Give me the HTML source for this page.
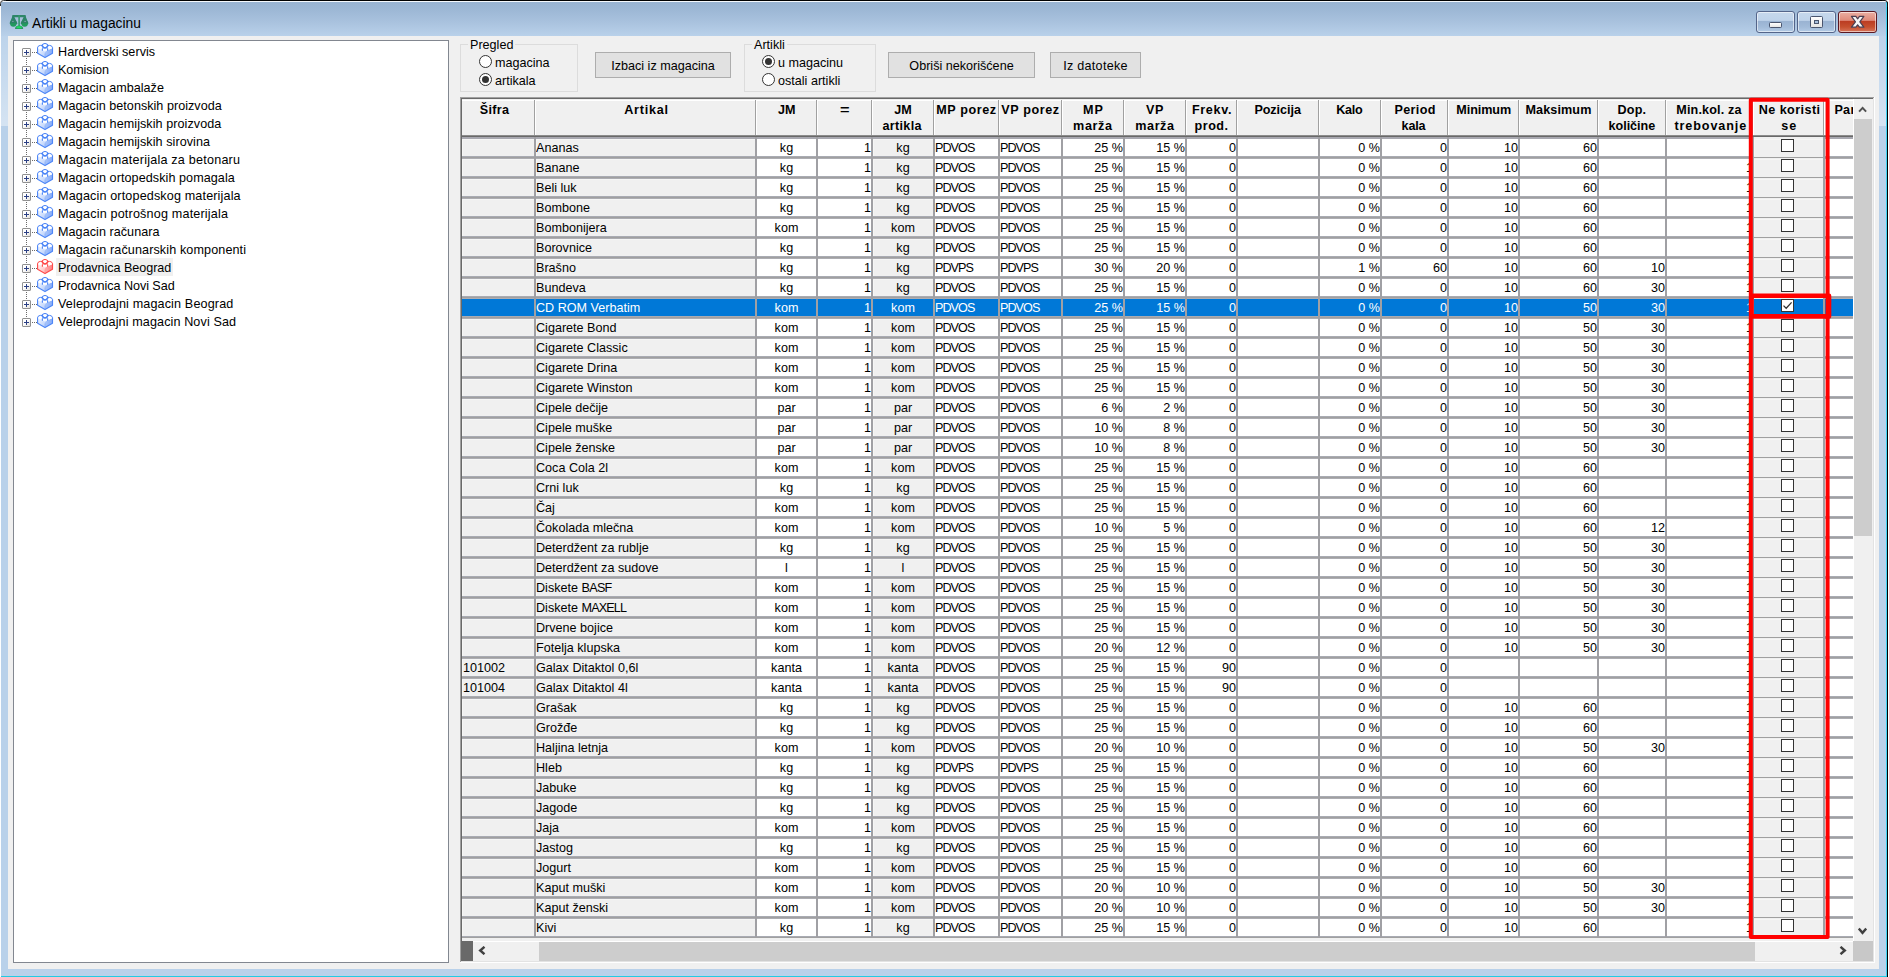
<!DOCTYPE html>
<html><head><meta charset="utf-8"><title>Artikli u magacinu</title>
<style>
*{box-sizing:border-box}
html,body{margin:0;padding:0}
body{width:1889px;height:977px;overflow:hidden;position:relative;background:#b9d1ea;font-family:"Liberation Sans",sans-serif;font-size:12.6px;color:#000;line-height:18px}
div,span,svg{position:absolute}
.t{white-space:nowrap}
#client{left:8px;top:36px;width:1871px;height:933px;background:#f0f0f0}
#tb{left:0;top:0;width:1889px;height:36px;background:linear-gradient(#98b3d1 0,#9bb6d4 8px,#a9c2de 22px,#b9d1ea 36px)}
#tree{left:13px;top:40px;width:436px;height:923px;border:1px solid #828790;background:#fff}
.ti{left:58px;height:18px;line-height:18px;white-space:nowrap}
.ex{left:22px;width:9px;height:9px;border:1px solid #919191;background:linear-gradient(135deg,#fff 0,#fff 40%,#e3e1dc 100%);border-radius:1px}
.ex:before,.ex:after{content:"";position:absolute;background:#2b3f84}
.ex:before{left:1px;top:3px;width:5px;height:1px}
.ex:after{left:3px;top:1px;width:1px;height:5px}
.hd{left:32px;width:5px;height:1px;background:repeating-linear-gradient(90deg,#6a6a6a 0,#6a6a6a 1px,transparent 1px,transparent 2px)}
.vd{left:26px;width:1px;height:8px;background:repeating-linear-gradient(180deg,#6a6a6a 0,#6a6a6a 1px,transparent 1px,transparent 2px)}
.gb{border:1px solid #dcdcdc;top:44px;height:48px}
.gl{top:37px;height:16px;line-height:16px;background:#f0f0f0;padding:0 2px;white-space:nowrap}
.rad{width:13px;height:13px;border:1px solid #333;border-radius:50%;background:#fff}
.rad.on:after{content:"";position:absolute;left:2px;top:2px;width:7px;height:7px;border-radius:50%;background:#333}
.rl{height:18px;line-height:18px;white-space:nowrap}
.btn{top:52px;height:26px;line-height:26px;border:1px solid #adadad;background:#e1e1e1;text-align:center;white-space:nowrap}
#grid{left:460px;top:97px;width:1415px;height:866px;background:#fff}
.h{top:101px;height:34px;background:#f0f0f0;font-weight:bold;text-align:center;line-height:16px;white-space:nowrap;overflow:hidden;padding-top:1px}
.hl{height:16px;line-height:16px;font-weight:bold;white-space:nowrap}
.hs{top:100px;width:2px;height:35px;background:linear-gradient(90deg,#a0a0a0 0,#a0a0a0 1px,#fff 1px,#fff 2px)}
.r{left:0;width:1889px;height:17px}
.c{top:0;height:17px;line-height:18px;background:#fff;white-space:nowrap;overflow:hidden}
.g{background:#f0f0f0;box-shadow:inset 1px 1px 0 #f6f6f5}
.ar{text-align:right;padding-right:0}
.k5,.k6{letter-spacing:-0.95px}
.k7,.k8,.k11{padding-right:0}
.k0{padding-left:1px}
i{font-style:normal}
.ti{letter-spacing:.08px}
.ac{text-align:center}
.sel .c{background:#0078d7;color:#fff;box-shadow:none}
.cb{left:27px;top:0;width:13px;height:13px;border:1px solid #333;background:#fff}

.k0{left:462px;width:72px}
.k1{left:536px;width:219px}
.k2{left:757px;width:59px}
.k3{left:818px;width:53px}
.k4{left:873px;width:60px}
.k5{left:935px;width:63px}
.k6{left:1000px;width:61px}
.k7{left:1063px;width:60px}
.k8{left:1125px;width:60px}
.k9{left:1187px;width:49px}
.k10{left:1238px;width:80px}
.k11{left:1320px;width:60px}
.k12{left:1382px;width:65px}
.k13{left:1449px;width:69px}
.k14{left:1520px;width:77px}
.k15{left:1599px;width:66px}
.k16{left:1667px;width:85px}
.k17{left:1754px;width:69px}
.k18{left:1825px;width:28px}
.k16{width:86px}</style></head>
<body>
<div id="tb"></div>
<div id="client"></div>
<div id="tree"></div>
<div class="vd" style="top:58px"></div>
<div class="hd" style="top:52px"></div>
<div class="ex" style="top:48px"></div>
<svg style="left:37px;top:43px" width="17" height="16" viewBox="0 0 17 16"><path d="M0.6 5 L0.6 10.3 L8 14.6 L8 8.6 Z" fill="url(#gbl)"/><path d="M8 8.6 L8 14.6 L15.5 10.3 L15.5 5 Z" fill="url(#gbr)"/><path d="M0.6 5 L8 1.6 L15.5 5 L8 8.8 Z" fill="#dfe9fe"/><path d="M0.6 4.2 L0.6 10.3 L8 14.6 L15.5 10.3 L15.5 4.2" fill="none" stroke="#4d86f7" stroke-width="1.15" stroke-linejoin="round"/><path d="M8 10.5 L8 14" stroke="#7aa5f9" stroke-width="0.6"/><path d="M0.8 4.2 Q3.4 1.3 6 4 L5.5 5.4 Q3.4 6.6 1.3 5.4 Z" fill="#fff"/><path d="M0.7 4.6 Q0.9 2.4 3.4 2.4 Q5.6 2.4 6 3.6" fill="none" stroke="#4d86f7" stroke-width="1"/><path d="M10 4 Q12.6 1.3 15.3 4.2 L14.7 5.4 Q12.6 6.6 10.5 5.4 Z" fill="#fff"/><path d="M10 3.6 Q10.4 2.4 12.6 2.4 Q15.1 2.4 15.4 4.6" fill="none" stroke="#4d86f7" stroke-width="1"/><path d="M5.2 1.9 Q8 -0.9 10.8 1.9 Q10.5 4.7 8 4.7 Q5.5 4.7 5.2 1.9 Z" fill="#fff" stroke="#4d86f7" stroke-width="1.05"/><path d="M5.6 5.9 Q8 4.6 10.4 5.9 L10 7.3 Q8 8.4 6 7.3 Z" fill="#fff"/><path d="M5.4 7.8 L5.4 5.2 M10.6 7.8 L10.6 5.2" fill="none" stroke="#4d86f7" stroke-width="1.1"/><path d="M5.2 2.4 Q5.6 5 8 5 Q10.4 5 10.8 2.4" fill="none" stroke="#4d86f7" stroke-width="1.3"/></svg>
<div class="ti" style="top:43px;letter-spacing:0.033px">Hardverski servis</div>
<div class="vd" style="top:76px"></div>
<div class="hd" style="top:70px"></div>
<div class="ex" style="top:66px"></div>
<svg style="left:37px;top:61px" width="17" height="16" viewBox="0 0 17 16"><path d="M0.6 5 L0.6 10.3 L8 14.6 L8 8.6 Z" fill="url(#gbl)"/><path d="M8 8.6 L8 14.6 L15.5 10.3 L15.5 5 Z" fill="url(#gbr)"/><path d="M0.6 5 L8 1.6 L15.5 5 L8 8.8 Z" fill="#dfe9fe"/><path d="M0.6 4.2 L0.6 10.3 L8 14.6 L15.5 10.3 L15.5 4.2" fill="none" stroke="#4d86f7" stroke-width="1.15" stroke-linejoin="round"/><path d="M8 10.5 L8 14" stroke="#7aa5f9" stroke-width="0.6"/><path d="M0.8 4.2 Q3.4 1.3 6 4 L5.5 5.4 Q3.4 6.6 1.3 5.4 Z" fill="#fff"/><path d="M0.7 4.6 Q0.9 2.4 3.4 2.4 Q5.6 2.4 6 3.6" fill="none" stroke="#4d86f7" stroke-width="1"/><path d="M10 4 Q12.6 1.3 15.3 4.2 L14.7 5.4 Q12.6 6.6 10.5 5.4 Z" fill="#fff"/><path d="M10 3.6 Q10.4 2.4 12.6 2.4 Q15.1 2.4 15.4 4.6" fill="none" stroke="#4d86f7" stroke-width="1"/><path d="M5.2 1.9 Q8 -0.9 10.8 1.9 Q10.5 4.7 8 4.7 Q5.5 4.7 5.2 1.9 Z" fill="#fff" stroke="#4d86f7" stroke-width="1.05"/><path d="M5.6 5.9 Q8 4.6 10.4 5.9 L10 7.3 Q8 8.4 6 7.3 Z" fill="#fff"/><path d="M5.4 7.8 L5.4 5.2 M10.6 7.8 L10.6 5.2" fill="none" stroke="#4d86f7" stroke-width="1.1"/><path d="M5.2 2.4 Q5.6 5 8 5 Q10.4 5 10.8 2.4" fill="none" stroke="#4d86f7" stroke-width="1.3"/></svg>
<div class="ti" style="top:61px;letter-spacing:-0.120px">Komision</div>
<div class="vd" style="top:94px"></div>
<div class="hd" style="top:88px"></div>
<div class="ex" style="top:84px"></div>
<svg style="left:37px;top:79px" width="17" height="16" viewBox="0 0 17 16"><path d="M0.6 5 L0.6 10.3 L8 14.6 L8 8.6 Z" fill="url(#gbl)"/><path d="M8 8.6 L8 14.6 L15.5 10.3 L15.5 5 Z" fill="url(#gbr)"/><path d="M0.6 5 L8 1.6 L15.5 5 L8 8.8 Z" fill="#dfe9fe"/><path d="M0.6 4.2 L0.6 10.3 L8 14.6 L15.5 10.3 L15.5 4.2" fill="none" stroke="#4d86f7" stroke-width="1.15" stroke-linejoin="round"/><path d="M8 10.5 L8 14" stroke="#7aa5f9" stroke-width="0.6"/><path d="M0.8 4.2 Q3.4 1.3 6 4 L5.5 5.4 Q3.4 6.6 1.3 5.4 Z" fill="#fff"/><path d="M0.7 4.6 Q0.9 2.4 3.4 2.4 Q5.6 2.4 6 3.6" fill="none" stroke="#4d86f7" stroke-width="1"/><path d="M10 4 Q12.6 1.3 15.3 4.2 L14.7 5.4 Q12.6 6.6 10.5 5.4 Z" fill="#fff"/><path d="M10 3.6 Q10.4 2.4 12.6 2.4 Q15.1 2.4 15.4 4.6" fill="none" stroke="#4d86f7" stroke-width="1"/><path d="M5.2 1.9 Q8 -0.9 10.8 1.9 Q10.5 4.7 8 4.7 Q5.5 4.7 5.2 1.9 Z" fill="#fff" stroke="#4d86f7" stroke-width="1.05"/><path d="M5.6 5.9 Q8 4.6 10.4 5.9 L10 7.3 Q8 8.4 6 7.3 Z" fill="#fff"/><path d="M5.4 7.8 L5.4 5.2 M10.6 7.8 L10.6 5.2" fill="none" stroke="#4d86f7" stroke-width="1.1"/><path d="M5.2 2.4 Q5.6 5 8 5 Q10.4 5 10.8 2.4" fill="none" stroke="#4d86f7" stroke-width="1.3"/></svg>
<div class="ti" style="top:79px;letter-spacing:0.013px">Magacin ambalaže</div>
<div class="vd" style="top:112px"></div>
<div class="hd" style="top:106px"></div>
<div class="ex" style="top:102px"></div>
<svg style="left:37px;top:97px" width="17" height="16" viewBox="0 0 17 16"><path d="M0.6 5 L0.6 10.3 L8 14.6 L8 8.6 Z" fill="url(#gbl)"/><path d="M8 8.6 L8 14.6 L15.5 10.3 L15.5 5 Z" fill="url(#gbr)"/><path d="M0.6 5 L8 1.6 L15.5 5 L8 8.8 Z" fill="#dfe9fe"/><path d="M0.6 4.2 L0.6 10.3 L8 14.6 L15.5 10.3 L15.5 4.2" fill="none" stroke="#4d86f7" stroke-width="1.15" stroke-linejoin="round"/><path d="M8 10.5 L8 14" stroke="#7aa5f9" stroke-width="0.6"/><path d="M0.8 4.2 Q3.4 1.3 6 4 L5.5 5.4 Q3.4 6.6 1.3 5.4 Z" fill="#fff"/><path d="M0.7 4.6 Q0.9 2.4 3.4 2.4 Q5.6 2.4 6 3.6" fill="none" stroke="#4d86f7" stroke-width="1"/><path d="M10 4 Q12.6 1.3 15.3 4.2 L14.7 5.4 Q12.6 6.6 10.5 5.4 Z" fill="#fff"/><path d="M10 3.6 Q10.4 2.4 12.6 2.4 Q15.1 2.4 15.4 4.6" fill="none" stroke="#4d86f7" stroke-width="1"/><path d="M5.2 1.9 Q8 -0.9 10.8 1.9 Q10.5 4.7 8 4.7 Q5.5 4.7 5.2 1.9 Z" fill="#fff" stroke="#4d86f7" stroke-width="1.05"/><path d="M5.6 5.9 Q8 4.6 10.4 5.9 L10 7.3 Q8 8.4 6 7.3 Z" fill="#fff"/><path d="M5.4 7.8 L5.4 5.2 M10.6 7.8 L10.6 5.2" fill="none" stroke="#4d86f7" stroke-width="1.1"/><path d="M5.2 2.4 Q5.6 5 8 5 Q10.4 5 10.8 2.4" fill="none" stroke="#4d86f7" stroke-width="1.3"/></svg>
<div class="ti" style="top:97px;letter-spacing:0.022px">Magacin betonskih proizvoda</div>
<div class="vd" style="top:130px"></div>
<div class="hd" style="top:124px"></div>
<div class="ex" style="top:120px"></div>
<svg style="left:37px;top:115px" width="17" height="16" viewBox="0 0 17 16"><path d="M0.6 5 L0.6 10.3 L8 14.6 L8 8.6 Z" fill="url(#gbl)"/><path d="M8 8.6 L8 14.6 L15.5 10.3 L15.5 5 Z" fill="url(#gbr)"/><path d="M0.6 5 L8 1.6 L15.5 5 L8 8.8 Z" fill="#dfe9fe"/><path d="M0.6 4.2 L0.6 10.3 L8 14.6 L15.5 10.3 L15.5 4.2" fill="none" stroke="#4d86f7" stroke-width="1.15" stroke-linejoin="round"/><path d="M8 10.5 L8 14" stroke="#7aa5f9" stroke-width="0.6"/><path d="M0.8 4.2 Q3.4 1.3 6 4 L5.5 5.4 Q3.4 6.6 1.3 5.4 Z" fill="#fff"/><path d="M0.7 4.6 Q0.9 2.4 3.4 2.4 Q5.6 2.4 6 3.6" fill="none" stroke="#4d86f7" stroke-width="1"/><path d="M10 4 Q12.6 1.3 15.3 4.2 L14.7 5.4 Q12.6 6.6 10.5 5.4 Z" fill="#fff"/><path d="M10 3.6 Q10.4 2.4 12.6 2.4 Q15.1 2.4 15.4 4.6" fill="none" stroke="#4d86f7" stroke-width="1"/><path d="M5.2 1.9 Q8 -0.9 10.8 1.9 Q10.5 4.7 8 4.7 Q5.5 4.7 5.2 1.9 Z" fill="#fff" stroke="#4d86f7" stroke-width="1.05"/><path d="M5.6 5.9 Q8 4.6 10.4 5.9 L10 7.3 Q8 8.4 6 7.3 Z" fill="#fff"/><path d="M5.4 7.8 L5.4 5.2 M10.6 7.8 L10.6 5.2" fill="none" stroke="#4d86f7" stroke-width="1.1"/><path d="M5.2 2.4 Q5.6 5 8 5 Q10.4 5 10.8 2.4" fill="none" stroke="#4d86f7" stroke-width="1.3"/></svg>
<div class="ti" style="top:115px;letter-spacing:0.061px">Magacin hemijskih proizvoda</div>
<div class="vd" style="top:148px"></div>
<div class="hd" style="top:142px"></div>
<div class="ex" style="top:138px"></div>
<svg style="left:37px;top:133px" width="17" height="16" viewBox="0 0 17 16"><path d="M0.6 5 L0.6 10.3 L8 14.6 L8 8.6 Z" fill="url(#gbl)"/><path d="M8 8.6 L8 14.6 L15.5 10.3 L15.5 5 Z" fill="url(#gbr)"/><path d="M0.6 5 L8 1.6 L15.5 5 L8 8.8 Z" fill="#dfe9fe"/><path d="M0.6 4.2 L0.6 10.3 L8 14.6 L15.5 10.3 L15.5 4.2" fill="none" stroke="#4d86f7" stroke-width="1.15" stroke-linejoin="round"/><path d="M8 10.5 L8 14" stroke="#7aa5f9" stroke-width="0.6"/><path d="M0.8 4.2 Q3.4 1.3 6 4 L5.5 5.4 Q3.4 6.6 1.3 5.4 Z" fill="#fff"/><path d="M0.7 4.6 Q0.9 2.4 3.4 2.4 Q5.6 2.4 6 3.6" fill="none" stroke="#4d86f7" stroke-width="1"/><path d="M10 4 Q12.6 1.3 15.3 4.2 L14.7 5.4 Q12.6 6.6 10.5 5.4 Z" fill="#fff"/><path d="M10 3.6 Q10.4 2.4 12.6 2.4 Q15.1 2.4 15.4 4.6" fill="none" stroke="#4d86f7" stroke-width="1"/><path d="M5.2 1.9 Q8 -0.9 10.8 1.9 Q10.5 4.7 8 4.7 Q5.5 4.7 5.2 1.9 Z" fill="#fff" stroke="#4d86f7" stroke-width="1.05"/><path d="M5.6 5.9 Q8 4.6 10.4 5.9 L10 7.3 Q8 8.4 6 7.3 Z" fill="#fff"/><path d="M5.4 7.8 L5.4 5.2 M10.6 7.8 L10.6 5.2" fill="none" stroke="#4d86f7" stroke-width="1.1"/><path d="M5.2 2.4 Q5.6 5 8 5 Q10.4 5 10.8 2.4" fill="none" stroke="#4d86f7" stroke-width="1.3"/></svg>
<div class="ti" style="top:133px;letter-spacing:0.060px">Magacin hemijskih sirovina</div>
<div class="vd" style="top:166px"></div>
<div class="hd" style="top:160px"></div>
<div class="ex" style="top:156px"></div>
<svg style="left:37px;top:151px" width="17" height="16" viewBox="0 0 17 16"><path d="M0.6 5 L0.6 10.3 L8 14.6 L8 8.6 Z" fill="url(#gbl)"/><path d="M8 8.6 L8 14.6 L15.5 10.3 L15.5 5 Z" fill="url(#gbr)"/><path d="M0.6 5 L8 1.6 L15.5 5 L8 8.8 Z" fill="#dfe9fe"/><path d="M0.6 4.2 L0.6 10.3 L8 14.6 L15.5 10.3 L15.5 4.2" fill="none" stroke="#4d86f7" stroke-width="1.15" stroke-linejoin="round"/><path d="M8 10.5 L8 14" stroke="#7aa5f9" stroke-width="0.6"/><path d="M0.8 4.2 Q3.4 1.3 6 4 L5.5 5.4 Q3.4 6.6 1.3 5.4 Z" fill="#fff"/><path d="M0.7 4.6 Q0.9 2.4 3.4 2.4 Q5.6 2.4 6 3.6" fill="none" stroke="#4d86f7" stroke-width="1"/><path d="M10 4 Q12.6 1.3 15.3 4.2 L14.7 5.4 Q12.6 6.6 10.5 5.4 Z" fill="#fff"/><path d="M10 3.6 Q10.4 2.4 12.6 2.4 Q15.1 2.4 15.4 4.6" fill="none" stroke="#4d86f7" stroke-width="1"/><path d="M5.2 1.9 Q8 -0.9 10.8 1.9 Q10.5 4.7 8 4.7 Q5.5 4.7 5.2 1.9 Z" fill="#fff" stroke="#4d86f7" stroke-width="1.05"/><path d="M5.6 5.9 Q8 4.6 10.4 5.9 L10 7.3 Q8 8.4 6 7.3 Z" fill="#fff"/><path d="M5.4 7.8 L5.4 5.2 M10.6 7.8 L10.6 5.2" fill="none" stroke="#4d86f7" stroke-width="1.1"/><path d="M5.2 2.4 Q5.6 5 8 5 Q10.4 5 10.8 2.4" fill="none" stroke="#4d86f7" stroke-width="1.3"/></svg>
<div class="ti" style="top:151px;letter-spacing:0.218px">Magacin materijala za betonaru</div>
<div class="vd" style="top:184px"></div>
<div class="hd" style="top:178px"></div>
<div class="ex" style="top:174px"></div>
<svg style="left:37px;top:169px" width="17" height="16" viewBox="0 0 17 16"><path d="M0.6 5 L0.6 10.3 L8 14.6 L8 8.6 Z" fill="url(#gbl)"/><path d="M8 8.6 L8 14.6 L15.5 10.3 L15.5 5 Z" fill="url(#gbr)"/><path d="M0.6 5 L8 1.6 L15.5 5 L8 8.8 Z" fill="#dfe9fe"/><path d="M0.6 4.2 L0.6 10.3 L8 14.6 L15.5 10.3 L15.5 4.2" fill="none" stroke="#4d86f7" stroke-width="1.15" stroke-linejoin="round"/><path d="M8 10.5 L8 14" stroke="#7aa5f9" stroke-width="0.6"/><path d="M0.8 4.2 Q3.4 1.3 6 4 L5.5 5.4 Q3.4 6.6 1.3 5.4 Z" fill="#fff"/><path d="M0.7 4.6 Q0.9 2.4 3.4 2.4 Q5.6 2.4 6 3.6" fill="none" stroke="#4d86f7" stroke-width="1"/><path d="M10 4 Q12.6 1.3 15.3 4.2 L14.7 5.4 Q12.6 6.6 10.5 5.4 Z" fill="#fff"/><path d="M10 3.6 Q10.4 2.4 12.6 2.4 Q15.1 2.4 15.4 4.6" fill="none" stroke="#4d86f7" stroke-width="1"/><path d="M5.2 1.9 Q8 -0.9 10.8 1.9 Q10.5 4.7 8 4.7 Q5.5 4.7 5.2 1.9 Z" fill="#fff" stroke="#4d86f7" stroke-width="1.05"/><path d="M5.6 5.9 Q8 4.6 10.4 5.9 L10 7.3 Q8 8.4 6 7.3 Z" fill="#fff"/><path d="M5.4 7.8 L5.4 5.2 M10.6 7.8 L10.6 5.2" fill="none" stroke="#4d86f7" stroke-width="1.1"/><path d="M5.2 2.4 Q5.6 5 8 5 Q10.4 5 10.8 2.4" fill="none" stroke="#4d86f7" stroke-width="1.3"/></svg>
<div class="ti" style="top:169px;letter-spacing:0.065px">Magacin ortopedskih pomagala</div>
<div class="vd" style="top:202px"></div>
<div class="hd" style="top:196px"></div>
<div class="ex" style="top:192px"></div>
<svg style="left:37px;top:187px" width="17" height="16" viewBox="0 0 17 16"><path d="M0.6 5 L0.6 10.3 L8 14.6 L8 8.6 Z" fill="url(#gbl)"/><path d="M8 8.6 L8 14.6 L15.5 10.3 L15.5 5 Z" fill="url(#gbr)"/><path d="M0.6 5 L8 1.6 L15.5 5 L8 8.8 Z" fill="#dfe9fe"/><path d="M0.6 4.2 L0.6 10.3 L8 14.6 L15.5 10.3 L15.5 4.2" fill="none" stroke="#4d86f7" stroke-width="1.15" stroke-linejoin="round"/><path d="M8 10.5 L8 14" stroke="#7aa5f9" stroke-width="0.6"/><path d="M0.8 4.2 Q3.4 1.3 6 4 L5.5 5.4 Q3.4 6.6 1.3 5.4 Z" fill="#fff"/><path d="M0.7 4.6 Q0.9 2.4 3.4 2.4 Q5.6 2.4 6 3.6" fill="none" stroke="#4d86f7" stroke-width="1"/><path d="M10 4 Q12.6 1.3 15.3 4.2 L14.7 5.4 Q12.6 6.6 10.5 5.4 Z" fill="#fff"/><path d="M10 3.6 Q10.4 2.4 12.6 2.4 Q15.1 2.4 15.4 4.6" fill="none" stroke="#4d86f7" stroke-width="1"/><path d="M5.2 1.9 Q8 -0.9 10.8 1.9 Q10.5 4.7 8 4.7 Q5.5 4.7 5.2 1.9 Z" fill="#fff" stroke="#4d86f7" stroke-width="1.05"/><path d="M5.6 5.9 Q8 4.6 10.4 5.9 L10 7.3 Q8 8.4 6 7.3 Z" fill="#fff"/><path d="M5.4 7.8 L5.4 5.2 M10.6 7.8 L10.6 5.2" fill="none" stroke="#4d86f7" stroke-width="1.1"/><path d="M5.2 2.4 Q5.6 5 8 5 Q10.4 5 10.8 2.4" fill="none" stroke="#4d86f7" stroke-width="1.3"/></svg>
<div class="ti" style="top:187px;letter-spacing:0.140px">Magacin ortopedskog materijala</div>
<div class="vd" style="top:220px"></div>
<div class="hd" style="top:214px"></div>
<div class="ex" style="top:210px"></div>
<svg style="left:37px;top:205px" width="17" height="16" viewBox="0 0 17 16"><path d="M0.6 5 L0.6 10.3 L8 14.6 L8 8.6 Z" fill="url(#gbl)"/><path d="M8 8.6 L8 14.6 L15.5 10.3 L15.5 5 Z" fill="url(#gbr)"/><path d="M0.6 5 L8 1.6 L15.5 5 L8 8.8 Z" fill="#dfe9fe"/><path d="M0.6 4.2 L0.6 10.3 L8 14.6 L15.5 10.3 L15.5 4.2" fill="none" stroke="#4d86f7" stroke-width="1.15" stroke-linejoin="round"/><path d="M8 10.5 L8 14" stroke="#7aa5f9" stroke-width="0.6"/><path d="M0.8 4.2 Q3.4 1.3 6 4 L5.5 5.4 Q3.4 6.6 1.3 5.4 Z" fill="#fff"/><path d="M0.7 4.6 Q0.9 2.4 3.4 2.4 Q5.6 2.4 6 3.6" fill="none" stroke="#4d86f7" stroke-width="1"/><path d="M10 4 Q12.6 1.3 15.3 4.2 L14.7 5.4 Q12.6 6.6 10.5 5.4 Z" fill="#fff"/><path d="M10 3.6 Q10.4 2.4 12.6 2.4 Q15.1 2.4 15.4 4.6" fill="none" stroke="#4d86f7" stroke-width="1"/><path d="M5.2 1.9 Q8 -0.9 10.8 1.9 Q10.5 4.7 8 4.7 Q5.5 4.7 5.2 1.9 Z" fill="#fff" stroke="#4d86f7" stroke-width="1.05"/><path d="M5.6 5.9 Q8 4.6 10.4 5.9 L10 7.3 Q8 8.4 6 7.3 Z" fill="#fff"/><path d="M5.4 7.8 L5.4 5.2 M10.6 7.8 L10.6 5.2" fill="none" stroke="#4d86f7" stroke-width="1.1"/><path d="M5.2 2.4 Q5.6 5 8 5 Q10.4 5 10.8 2.4" fill="none" stroke="#4d86f7" stroke-width="1.3"/></svg>
<div class="ti" style="top:205px;letter-spacing:0.176px">Magacin potrošnog materijala</div>
<div class="vd" style="top:238px"></div>
<div class="hd" style="top:232px"></div>
<div class="ex" style="top:228px"></div>
<svg style="left:37px;top:223px" width="17" height="16" viewBox="0 0 17 16"><path d="M0.6 5 L0.6 10.3 L8 14.6 L8 8.6 Z" fill="url(#gbl)"/><path d="M8 8.6 L8 14.6 L15.5 10.3 L15.5 5 Z" fill="url(#gbr)"/><path d="M0.6 5 L8 1.6 L15.5 5 L8 8.8 Z" fill="#dfe9fe"/><path d="M0.6 4.2 L0.6 10.3 L8 14.6 L15.5 10.3 L15.5 4.2" fill="none" stroke="#4d86f7" stroke-width="1.15" stroke-linejoin="round"/><path d="M8 10.5 L8 14" stroke="#7aa5f9" stroke-width="0.6"/><path d="M0.8 4.2 Q3.4 1.3 6 4 L5.5 5.4 Q3.4 6.6 1.3 5.4 Z" fill="#fff"/><path d="M0.7 4.6 Q0.9 2.4 3.4 2.4 Q5.6 2.4 6 3.6" fill="none" stroke="#4d86f7" stroke-width="1"/><path d="M10 4 Q12.6 1.3 15.3 4.2 L14.7 5.4 Q12.6 6.6 10.5 5.4 Z" fill="#fff"/><path d="M10 3.6 Q10.4 2.4 12.6 2.4 Q15.1 2.4 15.4 4.6" fill="none" stroke="#4d86f7" stroke-width="1"/><path d="M5.2 1.9 Q8 -0.9 10.8 1.9 Q10.5 4.7 8 4.7 Q5.5 4.7 5.2 1.9 Z" fill="#fff" stroke="#4d86f7" stroke-width="1.05"/><path d="M5.6 5.9 Q8 4.6 10.4 5.9 L10 7.3 Q8 8.4 6 7.3 Z" fill="#fff"/><path d="M5.4 7.8 L5.4 5.2 M10.6 7.8 L10.6 5.2" fill="none" stroke="#4d86f7" stroke-width="1.1"/><path d="M5.2 2.4 Q5.6 5 8 5 Q10.4 5 10.8 2.4" fill="none" stroke="#4d86f7" stroke-width="1.3"/></svg>
<div class="ti" style="top:223px;letter-spacing:0.047px">Magacin računara</div>
<div class="vd" style="top:256px"></div>
<div class="hd" style="top:250px"></div>
<div class="ex" style="top:246px"></div>
<svg style="left:37px;top:241px" width="17" height="16" viewBox="0 0 17 16"><path d="M0.6 5 L0.6 10.3 L8 14.6 L8 8.6 Z" fill="url(#gbl)"/><path d="M8 8.6 L8 14.6 L15.5 10.3 L15.5 5 Z" fill="url(#gbr)"/><path d="M0.6 5 L8 1.6 L15.5 5 L8 8.8 Z" fill="#dfe9fe"/><path d="M0.6 4.2 L0.6 10.3 L8 14.6 L15.5 10.3 L15.5 4.2" fill="none" stroke="#4d86f7" stroke-width="1.15" stroke-linejoin="round"/><path d="M8 10.5 L8 14" stroke="#7aa5f9" stroke-width="0.6"/><path d="M0.8 4.2 Q3.4 1.3 6 4 L5.5 5.4 Q3.4 6.6 1.3 5.4 Z" fill="#fff"/><path d="M0.7 4.6 Q0.9 2.4 3.4 2.4 Q5.6 2.4 6 3.6" fill="none" stroke="#4d86f7" stroke-width="1"/><path d="M10 4 Q12.6 1.3 15.3 4.2 L14.7 5.4 Q12.6 6.6 10.5 5.4 Z" fill="#fff"/><path d="M10 3.6 Q10.4 2.4 12.6 2.4 Q15.1 2.4 15.4 4.6" fill="none" stroke="#4d86f7" stroke-width="1"/><path d="M5.2 1.9 Q8 -0.9 10.8 1.9 Q10.5 4.7 8 4.7 Q5.5 4.7 5.2 1.9 Z" fill="#fff" stroke="#4d86f7" stroke-width="1.05"/><path d="M5.6 5.9 Q8 4.6 10.4 5.9 L10 7.3 Q8 8.4 6 7.3 Z" fill="#fff"/><path d="M5.4 7.8 L5.4 5.2 M10.6 7.8 L10.6 5.2" fill="none" stroke="#4d86f7" stroke-width="1.1"/><path d="M5.2 2.4 Q5.6 5 8 5 Q10.4 5 10.8 2.4" fill="none" stroke="#4d86f7" stroke-width="1.3"/></svg>
<div class="ti" style="top:241px;letter-spacing:0.111px">Magacin računarskih komponenti</div>
<div class="vd" style="top:274px"></div>
<div class="hd" style="top:268px"></div>
<div class="ex" style="top:264px"></div>
<svg style="left:37px;top:259px" width="17" height="16" viewBox="0 0 17 16"><path d="M0.6 5 L0.6 10.3 L8 14.6 L8 8.6 Z" fill="url(#grl)"/><path d="M8 8.6 L8 14.6 L15.5 10.3 L15.5 5 Z" fill="url(#grr)"/><path d="M0.6 5 L8 1.6 L15.5 5 L8 8.8 Z" fill="#ffe3e3"/><path d="M0.6 4.2 L0.6 10.3 L8 14.6 L15.5 10.3 L15.5 4.2" fill="none" stroke="#ff4a4a" stroke-width="1.15" stroke-linejoin="round"/><path d="M8 10.5 L8 14" stroke="#ff8a8a" stroke-width="0.6"/><path d="M0.8 4.2 Q3.4 1.3 6 4 L5.5 5.4 Q3.4 6.6 1.3 5.4 Z" fill="#fff"/><path d="M0.7 4.6 Q0.9 2.4 3.4 2.4 Q5.6 2.4 6 3.6" fill="none" stroke="#ff4a4a" stroke-width="1"/><path d="M10 4 Q12.6 1.3 15.3 4.2 L14.7 5.4 Q12.6 6.6 10.5 5.4 Z" fill="#fff"/><path d="M10 3.6 Q10.4 2.4 12.6 2.4 Q15.1 2.4 15.4 4.6" fill="none" stroke="#ff4a4a" stroke-width="1"/><path d="M5.2 1.9 Q8 -0.9 10.8 1.9 Q10.5 4.7 8 4.7 Q5.5 4.7 5.2 1.9 Z" fill="#fff" stroke="#ff4a4a" stroke-width="1.05"/><path d="M5.6 5.9 Q8 4.6 10.4 5.9 L10 7.3 Q8 8.4 6 7.3 Z" fill="#fff"/><path d="M5.4 7.8 L5.4 5.2 M10.6 7.8 L10.6 5.2" fill="none" stroke="#ff4a4a" stroke-width="1.1"/><path d="M5.2 2.4 Q5.6 5 8 5 Q10.4 5 10.8 2.4" fill="none" stroke="#ff4a4a" stroke-width="1.3"/></svg>
<div style="left:56px;top:258px;width:117px;height:18px;background:#f0f0f0"></div>
<div class="ti" style="top:259px;letter-spacing:-0.052px">Prodavnica Beograd</div>
<div class="vd" style="top:292px"></div>
<div class="hd" style="top:286px"></div>
<div class="ex" style="top:282px"></div>
<svg style="left:37px;top:277px" width="17" height="16" viewBox="0 0 17 16"><path d="M0.6 5 L0.6 10.3 L8 14.6 L8 8.6 Z" fill="url(#gbl)"/><path d="M8 8.6 L8 14.6 L15.5 10.3 L15.5 5 Z" fill="url(#gbr)"/><path d="M0.6 5 L8 1.6 L15.5 5 L8 8.8 Z" fill="#dfe9fe"/><path d="M0.6 4.2 L0.6 10.3 L8 14.6 L15.5 10.3 L15.5 4.2" fill="none" stroke="#4d86f7" stroke-width="1.15" stroke-linejoin="round"/><path d="M8 10.5 L8 14" stroke="#7aa5f9" stroke-width="0.6"/><path d="M0.8 4.2 Q3.4 1.3 6 4 L5.5 5.4 Q3.4 6.6 1.3 5.4 Z" fill="#fff"/><path d="M0.7 4.6 Q0.9 2.4 3.4 2.4 Q5.6 2.4 6 3.6" fill="none" stroke="#4d86f7" stroke-width="1"/><path d="M10 4 Q12.6 1.3 15.3 4.2 L14.7 5.4 Q12.6 6.6 10.5 5.4 Z" fill="#fff"/><path d="M10 3.6 Q10.4 2.4 12.6 2.4 Q15.1 2.4 15.4 4.6" fill="none" stroke="#4d86f7" stroke-width="1"/><path d="M5.2 1.9 Q8 -0.9 10.8 1.9 Q10.5 4.7 8 4.7 Q5.5 4.7 5.2 1.9 Z" fill="#fff" stroke="#4d86f7" stroke-width="1.05"/><path d="M5.6 5.9 Q8 4.6 10.4 5.9 L10 7.3 Q8 8.4 6 7.3 Z" fill="#fff"/><path d="M5.4 7.8 L5.4 5.2 M10.6 7.8 L10.6 5.2" fill="none" stroke="#4d86f7" stroke-width="1.1"/><path d="M5.2 2.4 Q5.6 5 8 5 Q10.4 5 10.8 2.4" fill="none" stroke="#4d86f7" stroke-width="1.3"/></svg>
<div class="ti" style="top:277px;letter-spacing:-0.053px">Prodavnica Novi Sad</div>
<div class="vd" style="top:310px"></div>
<div class="hd" style="top:304px"></div>
<div class="ex" style="top:300px"></div>
<svg style="left:37px;top:295px" width="17" height="16" viewBox="0 0 17 16"><path d="M0.6 5 L0.6 10.3 L8 14.6 L8 8.6 Z" fill="url(#gbl)"/><path d="M8 8.6 L8 14.6 L15.5 10.3 L15.5 5 Z" fill="url(#gbr)"/><path d="M0.6 5 L8 1.6 L15.5 5 L8 8.8 Z" fill="#dfe9fe"/><path d="M0.6 4.2 L0.6 10.3 L8 14.6 L15.5 10.3 L15.5 4.2" fill="none" stroke="#4d86f7" stroke-width="1.15" stroke-linejoin="round"/><path d="M8 10.5 L8 14" stroke="#7aa5f9" stroke-width="0.6"/><path d="M0.8 4.2 Q3.4 1.3 6 4 L5.5 5.4 Q3.4 6.6 1.3 5.4 Z" fill="#fff"/><path d="M0.7 4.6 Q0.9 2.4 3.4 2.4 Q5.6 2.4 6 3.6" fill="none" stroke="#4d86f7" stroke-width="1"/><path d="M10 4 Q12.6 1.3 15.3 4.2 L14.7 5.4 Q12.6 6.6 10.5 5.4 Z" fill="#fff"/><path d="M10 3.6 Q10.4 2.4 12.6 2.4 Q15.1 2.4 15.4 4.6" fill="none" stroke="#4d86f7" stroke-width="1"/><path d="M5.2 1.9 Q8 -0.9 10.8 1.9 Q10.5 4.7 8 4.7 Q5.5 4.7 5.2 1.9 Z" fill="#fff" stroke="#4d86f7" stroke-width="1.05"/><path d="M5.6 5.9 Q8 4.6 10.4 5.9 L10 7.3 Q8 8.4 6 7.3 Z" fill="#fff"/><path d="M5.4 7.8 L5.4 5.2 M10.6 7.8 L10.6 5.2" fill="none" stroke="#4d86f7" stroke-width="1.1"/><path d="M5.2 2.4 Q5.6 5 8 5 Q10.4 5 10.8 2.4" fill="none" stroke="#4d86f7" stroke-width="1.3"/></svg>
<div class="ti" style="top:295px;letter-spacing:0.139px">Veleprodajni magacin Beograd</div>
<div class="hd" style="top:322px"></div>
<div class="ex" style="top:318px"></div>
<svg style="left:37px;top:313px" width="17" height="16" viewBox="0 0 17 16"><path d="M0.6 5 L0.6 10.3 L8 14.6 L8 8.6 Z" fill="url(#gbl)"/><path d="M8 8.6 L8 14.6 L15.5 10.3 L15.5 5 Z" fill="url(#gbr)"/><path d="M0.6 5 L8 1.6 L15.5 5 L8 8.8 Z" fill="#dfe9fe"/><path d="M0.6 4.2 L0.6 10.3 L8 14.6 L15.5 10.3 L15.5 4.2" fill="none" stroke="#4d86f7" stroke-width="1.15" stroke-linejoin="round"/><path d="M8 10.5 L8 14" stroke="#7aa5f9" stroke-width="0.6"/><path d="M0.8 4.2 Q3.4 1.3 6 4 L5.5 5.4 Q3.4 6.6 1.3 5.4 Z" fill="#fff"/><path d="M0.7 4.6 Q0.9 2.4 3.4 2.4 Q5.6 2.4 6 3.6" fill="none" stroke="#4d86f7" stroke-width="1"/><path d="M10 4 Q12.6 1.3 15.3 4.2 L14.7 5.4 Q12.6 6.6 10.5 5.4 Z" fill="#fff"/><path d="M10 3.6 Q10.4 2.4 12.6 2.4 Q15.1 2.4 15.4 4.6" fill="none" stroke="#4d86f7" stroke-width="1"/><path d="M5.2 1.9 Q8 -0.9 10.8 1.9 Q10.5 4.7 8 4.7 Q5.5 4.7 5.2 1.9 Z" fill="#fff" stroke="#4d86f7" stroke-width="1.05"/><path d="M5.6 5.9 Q8 4.6 10.4 5.9 L10 7.3 Q8 8.4 6 7.3 Z" fill="#fff"/><path d="M5.4 7.8 L5.4 5.2 M10.6 7.8 L10.6 5.2" fill="none" stroke="#4d86f7" stroke-width="1.1"/><path d="M5.2 2.4 Q5.6 5 8 5 Q10.4 5 10.8 2.4" fill="none" stroke="#4d86f7" stroke-width="1.3"/></svg>
<div class="ti" style="top:313px;letter-spacing:0.107px">Veleprodajni magacin Novi Sad</div>
<div class="gb" style="left:460px;width:118px"></div><div class="gl" style="left:468px">Pregled</div>
<div class="rad" style="left:479px;top:55px"></div><div class="rl" style="left:495px;top:54px">magacina</div>
<div class="rad on" style="left:479px;top:73px"></div><div class="rl" style="left:495px;top:72px">artikala</div>
<div class="btn" style="left:595px;width:136px">Izbaci iz magacina</div>
<div class="gb" style="left:744px;width:132px"></div><div class="gl" style="left:752px">Artikli</div>
<div class="rad on" style="left:762px;top:55px"></div><div class="rl" style="left:778px;top:54px">u magacinu</div>
<div class="rad" style="left:762px;top:73px"></div><div class="rl" style="left:778px;top:72px">ostali artikli</div>
<div class="btn" style="left:888px;width:147px">Obriši nekorišćene</div>
<div class="btn" style="left:1050px;width:91px;letter-spacing:.28px">Iz datoteke</div>
<div id="grid"></div>
<div style="left:460px;top:97px;width:1415px;height:1px;background:#a0a0a0"></div>
<div style="left:460px;top:97px;width:1px;height:866px;background:#a0a0a0"></div>
<div style="left:461px;top:98px;width:1413px;height:1px;background:#696969"></div>
<div style="left:461px;top:98px;width:1px;height:864px;background:#696969"></div>
<div style="left:460px;top:962px;width:1415px;height:1px;background:#fff"></div>
<div style="left:1874px;top:97px;width:1px;height:866px;background:#fff"></div>
<div style="left:461px;top:961px;width:1413px;height:1px;background:#e3e3e3"></div>
<div style="left:1873px;top:98px;width:1px;height:864px;background:#e3e3e3"></div>
<div style="left:462px;top:99px;width:1411px;height:1px;background:#f0f0f0"></div>
<div style="left:462px;top:100px;width:1411px;height:1px;background:#fff"></div>
<div style="left:462px;top:101px;width:1411px;height:34px;background:#f0f0f0"></div>
<span class="hl" style="left:479.70px;top:102px;letter-spacing:0.327px">Šifra</span>
<span class="hl" style="left:624.25px;top:102px;letter-spacing:0.759px">Artikal</span>
<span class="hl" style="left:778.00px;top:102px;letter-spacing:-0.004px">JM</span>
<span class="hl" style="left:840.00px;top:102px;letter-spacing:0.000px;transform:scaleX(1.3);transform-origin:0 50%">=</span>
<span class="hl" style="left:894.25px;top:102px;letter-spacing:-0.004px">JM</span>
<span class="hl" style="left:882.50px;top:118px;letter-spacing:0.317px">artikla</span>
<span class="hl" style="left:936.25px;top:102px;letter-spacing:0.581px">MP porez</span>
<span class="hl" style="left:1001.25px;top:102px;letter-spacing:0.609px">VP porez</span>
<span class="hl" style="left:1083.10px;top:102px;letter-spacing:0.909px">MP</span>
<span class="hl" style="left:1073.10px;top:118px;letter-spacing:0.600px">marža</span>
<span class="hl" style="left:1145.90px;top:102px;letter-spacing:0.800px">VP</span>
<span class="hl" style="left:1135.25px;top:118px;letter-spacing:0.588px">marža</span>
<span class="hl" style="left:1191.90px;top:102px;letter-spacing:0.666px">Frekv.</span>
<span class="hl" style="left:1194.60px;top:118px;letter-spacing:0.480px">prod.</span>
<span class="hl" style="left:1254.40px;top:102px;letter-spacing:-0.056px">Pozicija</span>
<span class="hl" style="left:1336.25px;top:102px;letter-spacing:-0.249px">Kalo</span>
<span class="hl" style="left:1394.40px;top:102px;letter-spacing:0.371px">Period</span>
<span class="hl" style="left:1401.60px;top:118px;letter-spacing:-0.202px">kala</span>
<span class="hl" style="left:1456.25px;top:102px;letter-spacing:-0.054px">Minimum</span>
<span class="hl" style="left:1525.40px;top:102px;letter-spacing:0.130px">Maksimum</span>
<span class="hl" style="left:1617.50px;top:102px;letter-spacing:0.207px">Dop.</span>
<span class="hl" style="left:1608.50px;top:118px;letter-spacing:-0.020px">količine</span>
<span class="hl" style="left:1676.25px;top:102px;letter-spacing:0.158px">Min.kol. za</span>
<span class="hl" style="left:1674.40px;top:118px;letter-spacing:0.907px">trebovanje</span>
<span class="hl" style="left:1758.75px;top:102px;letter-spacing:0.440px">Ne koristi</span>
<span class="hl" style="left:1781.25px;top:118px;letter-spacing:0.996px">se</span>
<span class="hl" style="left:1834.40px;top:102px;letter-spacing:0.300px;width:18.90px;overflow:hidden">Par</span>
<div class="hs" style="left:534px"></div>
<div class="hs" style="left:755px"></div>
<div class="hs" style="left:816px"></div>
<div class="hs" style="left:871px"></div>
<div class="hs" style="left:933px"></div>
<div class="hs" style="left:998px"></div>
<div class="hs" style="left:1061px"></div>
<div class="hs" style="left:1123px"></div>
<div class="hs" style="left:1185px"></div>
<div class="hs" style="left:1236px"></div>
<div class="hs" style="left:1318px"></div>
<div class="hs" style="left:1380px"></div>
<div class="hs" style="left:1447px"></div>
<div class="hs" style="left:1518px"></div>
<div class="hs" style="left:1597px"></div>
<div class="hs" style="left:1665px"></div>
<div class="hs" style="left:1752px"></div>
<div class="hs" style="left:1823px"></div>
<div style="left:462px;top:135px;width:1391px;height:1px;background:#8c8c8c"></div>
<div style="left:462px;top:136px;width:1391px;height:1px;background:#696969"></div>
<div style="left:462px;top:137px;width:1391px;height:802px;background:#a0a0a0"></div>
<div style="left:462px;top:137px;width:1391px;height:2px;background:#a8a8b0"></div>
<div class="r" style="top:139px"><div class="c k0 g"></div><div class="c k1 g">Ananas</div><div class="c k2 ac">kg</div><div class="c k3 ar">1</div><div class="c k4 g ac">kg</div><div class="c k5">PDVOS</div><div class="c k6">PDVOS</div><div class="c k7 ar">25 %</div><div class="c k8 ar">15 %</div><div class="c k9 ar">0</div><div class="c k10"></div><div class="c k11 ar">0 %</div><div class="c k12 ar">0</div><div class="c k13 ar">10</div><div class="c k14 ar">60</div><div class="c k15 ar"></div><div class="c k16 ar"></div><div class="c k17 g ac"><div class="cb"></div></div><div class="c k18"></div></div>
<div style="left:462px;top:156px;width:1391px;height:3px;background:linear-gradient(#a9abb3 0,#a9abb3 1px,#a0a0a0 1px,#a0a0a0 2px,#adadb3 2px,#adadb3 3px)"></div>
<div style="left:1754px;top:156px;width:69px;height:1px;background:#f0f0f0"></div><div style="left:1754px;top:158px;width:69px;height:1px;background:#f0f0f0"></div>
<div class="r" style="top:159px"><div class="c k0 g"></div><div class="c k1 g">Banane</div><div class="c k2 ac">kg</div><div class="c k3 ar">1</div><div class="c k4 g ac">kg</div><div class="c k5">PDVOS</div><div class="c k6">PDVOS</div><div class="c k7 ar">25 %</div><div class="c k8 ar">15 %</div><div class="c k9 ar">0</div><div class="c k10"></div><div class="c k11 ar">0 %</div><div class="c k12 ar">0</div><div class="c k13 ar">10</div><div class="c k14 ar">60</div><div class="c k15 ar"></div><div class="c k16 ar">1</div><div class="c k17 g ac"><div class="cb"></div></div><div class="c k18"></div></div>
<div style="left:462px;top:176px;width:1391px;height:3px;background:linear-gradient(#a9abb3 0,#a9abb3 1px,#a0a0a0 1px,#a0a0a0 2px,#adadb3 2px,#adadb3 3px)"></div>
<div style="left:1754px;top:176px;width:69px;height:1px;background:#f0f0f0"></div><div style="left:1754px;top:178px;width:69px;height:1px;background:#f0f0f0"></div>
<div class="r" style="top:179px"><div class="c k0 g"></div><div class="c k1 g">Beli luk</div><div class="c k2 ac">kg</div><div class="c k3 ar">1</div><div class="c k4 g ac">kg</div><div class="c k5">PDVOS</div><div class="c k6">PDVOS</div><div class="c k7 ar">25 %</div><div class="c k8 ar">15 %</div><div class="c k9 ar">0</div><div class="c k10"></div><div class="c k11 ar">0 %</div><div class="c k12 ar">0</div><div class="c k13 ar">10</div><div class="c k14 ar">60</div><div class="c k15 ar"></div><div class="c k16 ar">1</div><div class="c k17 g ac"><div class="cb"></div></div><div class="c k18"></div></div>
<div style="left:462px;top:196px;width:1391px;height:3px;background:linear-gradient(#a9abb3 0,#a9abb3 1px,#a0a0a0 1px,#a0a0a0 2px,#adadb3 2px,#adadb3 3px)"></div>
<div style="left:1754px;top:196px;width:69px;height:1px;background:#f0f0f0"></div><div style="left:1754px;top:198px;width:69px;height:1px;background:#f0f0f0"></div>
<div class="r" style="top:199px"><div class="c k0 g"></div><div class="c k1 g">Bombone</div><div class="c k2 ac">kg</div><div class="c k3 ar">1</div><div class="c k4 g ac">kg</div><div class="c k5">PDVOS</div><div class="c k6">PDVOS</div><div class="c k7 ar">25 %</div><div class="c k8 ar">15 %</div><div class="c k9 ar">0</div><div class="c k10"></div><div class="c k11 ar">0 %</div><div class="c k12 ar">0</div><div class="c k13 ar">10</div><div class="c k14 ar">60</div><div class="c k15 ar"></div><div class="c k16 ar">1</div><div class="c k17 g ac"><div class="cb"></div></div><div class="c k18"></div></div>
<div style="left:462px;top:216px;width:1391px;height:3px;background:linear-gradient(#a9abb3 0,#a9abb3 1px,#a0a0a0 1px,#a0a0a0 2px,#adadb3 2px,#adadb3 3px)"></div>
<div style="left:1754px;top:216px;width:69px;height:1px;background:#f0f0f0"></div><div style="left:1754px;top:218px;width:69px;height:1px;background:#f0f0f0"></div>
<div class="r" style="top:219px"><div class="c k0 g"></div><div class="c k1 g">Bombonijera</div><div class="c k2 ac">kom</div><div class="c k3 ar">1</div><div class="c k4 g ac">kom</div><div class="c k5">PDVOS</div><div class="c k6">PDVOS</div><div class="c k7 ar">25 %</div><div class="c k8 ar">15 %</div><div class="c k9 ar">0</div><div class="c k10"></div><div class="c k11 ar">0 %</div><div class="c k12 ar">0</div><div class="c k13 ar">10</div><div class="c k14 ar">60</div><div class="c k15 ar"></div><div class="c k16 ar">1</div><div class="c k17 g ac"><div class="cb"></div></div><div class="c k18"></div></div>
<div style="left:462px;top:236px;width:1391px;height:3px;background:linear-gradient(#a9abb3 0,#a9abb3 1px,#a0a0a0 1px,#a0a0a0 2px,#adadb3 2px,#adadb3 3px)"></div>
<div style="left:1754px;top:236px;width:69px;height:1px;background:#f0f0f0"></div><div style="left:1754px;top:238px;width:69px;height:1px;background:#f0f0f0"></div>
<div class="r" style="top:239px"><div class="c k0 g"></div><div class="c k1 g">Borovnice</div><div class="c k2 ac">kg</div><div class="c k3 ar">1</div><div class="c k4 g ac">kg</div><div class="c k5">PDVOS</div><div class="c k6">PDVOS</div><div class="c k7 ar">25 %</div><div class="c k8 ar">15 %</div><div class="c k9 ar">0</div><div class="c k10"></div><div class="c k11 ar">0 %</div><div class="c k12 ar">0</div><div class="c k13 ar">10</div><div class="c k14 ar">60</div><div class="c k15 ar"></div><div class="c k16 ar">1</div><div class="c k17 g ac"><div class="cb"></div></div><div class="c k18"></div></div>
<div style="left:462px;top:256px;width:1391px;height:3px;background:linear-gradient(#a9abb3 0,#a9abb3 1px,#a0a0a0 1px,#a0a0a0 2px,#adadb3 2px,#adadb3 3px)"></div>
<div style="left:1754px;top:256px;width:69px;height:1px;background:#f0f0f0"></div><div style="left:1754px;top:258px;width:69px;height:1px;background:#f0f0f0"></div>
<div class="r" style="top:259px"><div class="c k0 g"></div><div class="c k1 g">Brašno</div><div class="c k2 ac">kg</div><div class="c k3 ar">1</div><div class="c k4 g ac">kg</div><div class="c k5">PDVPS</div><div class="c k6">PDVPS</div><div class="c k7 ar">30 %</div><div class="c k8 ar">20 %</div><div class="c k9 ar">0</div><div class="c k10"></div><div class="c k11 ar">1 %</div><div class="c k12 ar">60</div><div class="c k13 ar">10</div><div class="c k14 ar">60</div><div class="c k15 ar">10</div><div class="c k16 ar">1</div><div class="c k17 g ac"><div class="cb"></div></div><div class="c k18"></div></div>
<div style="left:462px;top:276px;width:1391px;height:3px;background:linear-gradient(#a9abb3 0,#a9abb3 1px,#a0a0a0 1px,#a0a0a0 2px,#adadb3 2px,#adadb3 3px)"></div>
<div style="left:1754px;top:276px;width:69px;height:1px;background:#f0f0f0"></div><div style="left:1754px;top:278px;width:69px;height:1px;background:#f0f0f0"></div>
<div class="r" style="top:279px"><div class="c k0 g"></div><div class="c k1 g">Bundeva</div><div class="c k2 ac">kg</div><div class="c k3 ar">1</div><div class="c k4 g ac">kg</div><div class="c k5">PDVOS</div><div class="c k6">PDVOS</div><div class="c k7 ar">25 %</div><div class="c k8 ar">15 %</div><div class="c k9 ar">0</div><div class="c k10"></div><div class="c k11 ar">0 %</div><div class="c k12 ar">0</div><div class="c k13 ar">10</div><div class="c k14 ar">60</div><div class="c k15 ar">30</div><div class="c k16 ar">1</div><div class="c k17 g ac"><div class="cb"></div></div><div class="c k18"></div></div>
<div style="left:462px;top:296px;width:1391px;height:3px;background:linear-gradient(#a9abb3 0,#a9abb3 1px,#a0a0a0 1px,#a0a0a0 2px,#adadb3 2px,#adadb3 3px)"></div>
<div style="left:1754px;top:296px;width:69px;height:1px;background:#f0f0f0"></div><div style="left:1754px;top:298px;width:69px;height:1px;background:#f0f0f0"></div>
<div class="r sel" style="top:299px"><div class="c k0 g"></div><div class="c k1 g">CD ROM Verbatim</div><div class="c k2 ac">kom</div><div class="c k3 ar">1</div><div class="c k4 g ac">kom</div><div class="c k5">PDVOS</div><div class="c k6">PDVOS</div><div class="c k7 ar">25 %</div><div class="c k8 ar">15 %</div><div class="c k9 ar">0</div><div class="c k10"></div><div class="c k11 ar">0 %</div><div class="c k12 ar">0</div><div class="c k13 ar">10</div><div class="c k14 ar">50</div><div class="c k15 ar">30</div><div class="c k16 ar">1</div><div class="c k17 g ac"><div class="cb"><svg style="left:0;top:0" width="11" height="11" viewBox="0 0 11 11"><path d="M1.5 5.6 L4.2 8.3 L9.6 2.4" fill="none" stroke="#333" stroke-width="1.3"/></svg></div></div><div class="c k18"></div></div>
<div style="left:462px;top:316px;width:1391px;height:3px;background:linear-gradient(#a9abb3 0,#a9abb3 1px,#a0a0a0 1px,#a0a0a0 2px,#adadb3 2px,#adadb3 3px)"></div>
<div style="left:1754px;top:316px;width:69px;height:1px;background:#f0f0f0"></div><div style="left:1754px;top:318px;width:69px;height:1px;background:#f0f0f0"></div>
<div class="r" style="top:319px"><div class="c k0 g"></div><div class="c k1 g">Cigarete Bond</div><div class="c k2 ac">kom</div><div class="c k3 ar">1</div><div class="c k4 g ac">kom</div><div class="c k5">PDVOS</div><div class="c k6">PDVOS</div><div class="c k7 ar">25 %</div><div class="c k8 ar">15 %</div><div class="c k9 ar">0</div><div class="c k10"></div><div class="c k11 ar">0 %</div><div class="c k12 ar">0</div><div class="c k13 ar">10</div><div class="c k14 ar">50</div><div class="c k15 ar">30</div><div class="c k16 ar">1</div><div class="c k17 g ac"><div class="cb"></div></div><div class="c k18"></div></div>
<div style="left:462px;top:336px;width:1391px;height:3px;background:linear-gradient(#a9abb3 0,#a9abb3 1px,#a0a0a0 1px,#a0a0a0 2px,#adadb3 2px,#adadb3 3px)"></div>
<div style="left:1754px;top:336px;width:69px;height:1px;background:#f0f0f0"></div><div style="left:1754px;top:338px;width:69px;height:1px;background:#f0f0f0"></div>
<div class="r" style="top:339px"><div class="c k0 g"></div><div class="c k1 g">Cigarete Classic</div><div class="c k2 ac">kom</div><div class="c k3 ar">1</div><div class="c k4 g ac">kom</div><div class="c k5">PDVOS</div><div class="c k6">PDVOS</div><div class="c k7 ar">25 %</div><div class="c k8 ar">15 %</div><div class="c k9 ar">0</div><div class="c k10"></div><div class="c k11 ar">0 %</div><div class="c k12 ar">0</div><div class="c k13 ar">10</div><div class="c k14 ar">50</div><div class="c k15 ar">30</div><div class="c k16 ar">1</div><div class="c k17 g ac"><div class="cb"></div></div><div class="c k18"></div></div>
<div style="left:462px;top:356px;width:1391px;height:3px;background:linear-gradient(#a9abb3 0,#a9abb3 1px,#a0a0a0 1px,#a0a0a0 2px,#adadb3 2px,#adadb3 3px)"></div>
<div style="left:1754px;top:356px;width:69px;height:1px;background:#f0f0f0"></div><div style="left:1754px;top:358px;width:69px;height:1px;background:#f0f0f0"></div>
<div class="r" style="top:359px"><div class="c k0 g"></div><div class="c k1 g">Cigarete Drina</div><div class="c k2 ac">kom</div><div class="c k3 ar">1</div><div class="c k4 g ac">kom</div><div class="c k5">PDVOS</div><div class="c k6">PDVOS</div><div class="c k7 ar">25 %</div><div class="c k8 ar">15 %</div><div class="c k9 ar">0</div><div class="c k10"></div><div class="c k11 ar">0 %</div><div class="c k12 ar">0</div><div class="c k13 ar">10</div><div class="c k14 ar">50</div><div class="c k15 ar">30</div><div class="c k16 ar">1</div><div class="c k17 g ac"><div class="cb"></div></div><div class="c k18"></div></div>
<div style="left:462px;top:376px;width:1391px;height:3px;background:linear-gradient(#a9abb3 0,#a9abb3 1px,#a0a0a0 1px,#a0a0a0 2px,#adadb3 2px,#adadb3 3px)"></div>
<div style="left:1754px;top:376px;width:69px;height:1px;background:#f0f0f0"></div><div style="left:1754px;top:378px;width:69px;height:1px;background:#f0f0f0"></div>
<div class="r" style="top:379px"><div class="c k0 g"></div><div class="c k1 g">Cigarete Winston</div><div class="c k2 ac">kom</div><div class="c k3 ar">1</div><div class="c k4 g ac">kom</div><div class="c k5">PDVOS</div><div class="c k6">PDVOS</div><div class="c k7 ar">25 %</div><div class="c k8 ar">15 %</div><div class="c k9 ar">0</div><div class="c k10"></div><div class="c k11 ar">0 %</div><div class="c k12 ar">0</div><div class="c k13 ar">10</div><div class="c k14 ar">50</div><div class="c k15 ar">30</div><div class="c k16 ar">1</div><div class="c k17 g ac"><div class="cb"></div></div><div class="c k18"></div></div>
<div style="left:462px;top:396px;width:1391px;height:3px;background:linear-gradient(#a9abb3 0,#a9abb3 1px,#a0a0a0 1px,#a0a0a0 2px,#adadb3 2px,#adadb3 3px)"></div>
<div style="left:1754px;top:396px;width:69px;height:1px;background:#f0f0f0"></div><div style="left:1754px;top:398px;width:69px;height:1px;background:#f0f0f0"></div>
<div class="r" style="top:399px"><div class="c k0 g"></div><div class="c k1 g">Cipele dečije</div><div class="c k2 ac">par</div><div class="c k3 ar">1</div><div class="c k4 g ac">par</div><div class="c k5">PDVOS</div><div class="c k6">PDVOS</div><div class="c k7 ar">6 %</div><div class="c k8 ar">2 %</div><div class="c k9 ar">0</div><div class="c k10"></div><div class="c k11 ar">0 %</div><div class="c k12 ar">0</div><div class="c k13 ar">10</div><div class="c k14 ar">50</div><div class="c k15 ar">30</div><div class="c k16 ar">1</div><div class="c k17 g ac"><div class="cb"></div></div><div class="c k18"></div></div>
<div style="left:462px;top:416px;width:1391px;height:3px;background:linear-gradient(#a9abb3 0,#a9abb3 1px,#a0a0a0 1px,#a0a0a0 2px,#adadb3 2px,#adadb3 3px)"></div>
<div style="left:1754px;top:416px;width:69px;height:1px;background:#f0f0f0"></div><div style="left:1754px;top:418px;width:69px;height:1px;background:#f0f0f0"></div>
<div class="r" style="top:419px"><div class="c k0 g"></div><div class="c k1 g">Cipele muške</div><div class="c k2 ac">par</div><div class="c k3 ar">1</div><div class="c k4 g ac">par</div><div class="c k5">PDVOS</div><div class="c k6">PDVOS</div><div class="c k7 ar">10 %</div><div class="c k8 ar">8 %</div><div class="c k9 ar">0</div><div class="c k10"></div><div class="c k11 ar">0 %</div><div class="c k12 ar">0</div><div class="c k13 ar">10</div><div class="c k14 ar">50</div><div class="c k15 ar">30</div><div class="c k16 ar">1</div><div class="c k17 g ac"><div class="cb"></div></div><div class="c k18"></div></div>
<div style="left:462px;top:436px;width:1391px;height:3px;background:linear-gradient(#a9abb3 0,#a9abb3 1px,#a0a0a0 1px,#a0a0a0 2px,#adadb3 2px,#adadb3 3px)"></div>
<div style="left:1754px;top:436px;width:69px;height:1px;background:#f0f0f0"></div><div style="left:1754px;top:438px;width:69px;height:1px;background:#f0f0f0"></div>
<div class="r" style="top:439px"><div class="c k0 g"></div><div class="c k1 g">Cipele ženske</div><div class="c k2 ac">par</div><div class="c k3 ar">1</div><div class="c k4 g ac">par</div><div class="c k5">PDVOS</div><div class="c k6">PDVOS</div><div class="c k7 ar">10 %</div><div class="c k8 ar">8 %</div><div class="c k9 ar">0</div><div class="c k10"></div><div class="c k11 ar">0 %</div><div class="c k12 ar">0</div><div class="c k13 ar">10</div><div class="c k14 ar">50</div><div class="c k15 ar">30</div><div class="c k16 ar">1</div><div class="c k17 g ac"><div class="cb"></div></div><div class="c k18"></div></div>
<div style="left:462px;top:456px;width:1391px;height:3px;background:linear-gradient(#a9abb3 0,#a9abb3 1px,#a0a0a0 1px,#a0a0a0 2px,#adadb3 2px,#adadb3 3px)"></div>
<div style="left:1754px;top:456px;width:69px;height:1px;background:#f0f0f0"></div><div style="left:1754px;top:458px;width:69px;height:1px;background:#f0f0f0"></div>
<div class="r" style="top:459px"><div class="c k0 g"></div><div class="c k1 g">Coca Cola 2l</div><div class="c k2 ac">kom</div><div class="c k3 ar">1</div><div class="c k4 g ac">kom</div><div class="c k5">PDVOS</div><div class="c k6">PDVOS</div><div class="c k7 ar">25 %</div><div class="c k8 ar">15 %</div><div class="c k9 ar">0</div><div class="c k10"></div><div class="c k11 ar">0 %</div><div class="c k12 ar">0</div><div class="c k13 ar">10</div><div class="c k14 ar">60</div><div class="c k15 ar"></div><div class="c k16 ar">1</div><div class="c k17 g ac"><div class="cb"></div></div><div class="c k18"></div></div>
<div style="left:462px;top:476px;width:1391px;height:3px;background:linear-gradient(#a9abb3 0,#a9abb3 1px,#a0a0a0 1px,#a0a0a0 2px,#adadb3 2px,#adadb3 3px)"></div>
<div style="left:1754px;top:476px;width:69px;height:1px;background:#f0f0f0"></div><div style="left:1754px;top:478px;width:69px;height:1px;background:#f0f0f0"></div>
<div class="r" style="top:479px"><div class="c k0 g"></div><div class="c k1 g">Crni luk</div><div class="c k2 ac">kg</div><div class="c k3 ar">1</div><div class="c k4 g ac">kg</div><div class="c k5">PDVOS</div><div class="c k6">PDVOS</div><div class="c k7 ar">25 %</div><div class="c k8 ar">15 %</div><div class="c k9 ar">0</div><div class="c k10"></div><div class="c k11 ar">0 %</div><div class="c k12 ar">0</div><div class="c k13 ar">10</div><div class="c k14 ar">60</div><div class="c k15 ar"></div><div class="c k16 ar">1</div><div class="c k17 g ac"><div class="cb"></div></div><div class="c k18"></div></div>
<div style="left:462px;top:496px;width:1391px;height:3px;background:linear-gradient(#a9abb3 0,#a9abb3 1px,#a0a0a0 1px,#a0a0a0 2px,#adadb3 2px,#adadb3 3px)"></div>
<div style="left:1754px;top:496px;width:69px;height:1px;background:#f0f0f0"></div><div style="left:1754px;top:498px;width:69px;height:1px;background:#f0f0f0"></div>
<div class="r" style="top:499px"><div class="c k0 g"></div><div class="c k1 g">Čaj</div><div class="c k2 ac">kom</div><div class="c k3 ar">1</div><div class="c k4 g ac">kom</div><div class="c k5">PDVOS</div><div class="c k6">PDVOS</div><div class="c k7 ar">25 %</div><div class="c k8 ar">15 %</div><div class="c k9 ar">0</div><div class="c k10"></div><div class="c k11 ar">0 %</div><div class="c k12 ar">0</div><div class="c k13 ar">10</div><div class="c k14 ar">60</div><div class="c k15 ar"></div><div class="c k16 ar">1</div><div class="c k17 g ac"><div class="cb"></div></div><div class="c k18"></div></div>
<div style="left:462px;top:516px;width:1391px;height:3px;background:linear-gradient(#a9abb3 0,#a9abb3 1px,#a0a0a0 1px,#a0a0a0 2px,#adadb3 2px,#adadb3 3px)"></div>
<div style="left:1754px;top:516px;width:69px;height:1px;background:#f0f0f0"></div><div style="left:1754px;top:518px;width:69px;height:1px;background:#f0f0f0"></div>
<div class="r" style="top:519px"><div class="c k0 g"></div><div class="c k1 g">Čokolada mlečna</div><div class="c k2 ac">kom</div><div class="c k3 ar">1</div><div class="c k4 g ac">kom</div><div class="c k5">PDVOS</div><div class="c k6">PDVOS</div><div class="c k7 ar">10 %</div><div class="c k8 ar">5 %</div><div class="c k9 ar">0</div><div class="c k10"></div><div class="c k11 ar">0 %</div><div class="c k12 ar">0</div><div class="c k13 ar">10</div><div class="c k14 ar">60</div><div class="c k15 ar">12</div><div class="c k16 ar">1</div><div class="c k17 g ac"><div class="cb"></div></div><div class="c k18"></div></div>
<div style="left:462px;top:536px;width:1391px;height:3px;background:linear-gradient(#a9abb3 0,#a9abb3 1px,#a0a0a0 1px,#a0a0a0 2px,#adadb3 2px,#adadb3 3px)"></div>
<div style="left:1754px;top:536px;width:69px;height:1px;background:#f0f0f0"></div><div style="left:1754px;top:538px;width:69px;height:1px;background:#f0f0f0"></div>
<div class="r" style="top:539px"><div class="c k0 g"></div><div class="c k1 g">Deterdžent za rublje</div><div class="c k2 ac">kg</div><div class="c k3 ar">1</div><div class="c k4 g ac">kg</div><div class="c k5">PDVOS</div><div class="c k6">PDVOS</div><div class="c k7 ar">25 %</div><div class="c k8 ar">15 %</div><div class="c k9 ar">0</div><div class="c k10"></div><div class="c k11 ar">0 %</div><div class="c k12 ar">0</div><div class="c k13 ar">10</div><div class="c k14 ar">50</div><div class="c k15 ar">30</div><div class="c k16 ar">1</div><div class="c k17 g ac"><div class="cb"></div></div><div class="c k18"></div></div>
<div style="left:462px;top:556px;width:1391px;height:3px;background:linear-gradient(#a9abb3 0,#a9abb3 1px,#a0a0a0 1px,#a0a0a0 2px,#adadb3 2px,#adadb3 3px)"></div>
<div style="left:1754px;top:556px;width:69px;height:1px;background:#f0f0f0"></div><div style="left:1754px;top:558px;width:69px;height:1px;background:#f0f0f0"></div>
<div class="r" style="top:559px"><div class="c k0 g"></div><div class="c k1 g">Deterdžent za sudove</div><div class="c k2 ac">l</div><div class="c k3 ar">1</div><div class="c k4 g ac">l</div><div class="c k5">PDVOS</div><div class="c k6">PDVOS</div><div class="c k7 ar">25 %</div><div class="c k8 ar">15 %</div><div class="c k9 ar">0</div><div class="c k10"></div><div class="c k11 ar">0 %</div><div class="c k12 ar">0</div><div class="c k13 ar">10</div><div class="c k14 ar">50</div><div class="c k15 ar">30</div><div class="c k16 ar">1</div><div class="c k17 g ac"><div class="cb"></div></div><div class="c k18"></div></div>
<div style="left:462px;top:576px;width:1391px;height:3px;background:linear-gradient(#a9abb3 0,#a9abb3 1px,#a0a0a0 1px,#a0a0a0 2px,#adadb3 2px,#adadb3 3px)"></div>
<div style="left:1754px;top:576px;width:69px;height:1px;background:#f0f0f0"></div><div style="left:1754px;top:578px;width:69px;height:1px;background:#f0f0f0"></div>
<div class="r" style="top:579px"><div class="c k0 g"></div><div class="c k1 g">Diskete <i style="letter-spacing:-.7px">BASF</i></div><div class="c k2 ac">kom</div><div class="c k3 ar">1</div><div class="c k4 g ac">kom</div><div class="c k5">PDVOS</div><div class="c k6">PDVOS</div><div class="c k7 ar">25 %</div><div class="c k8 ar">15 %</div><div class="c k9 ar">0</div><div class="c k10"></div><div class="c k11 ar">0 %</div><div class="c k12 ar">0</div><div class="c k13 ar">10</div><div class="c k14 ar">50</div><div class="c k15 ar">30</div><div class="c k16 ar">1</div><div class="c k17 g ac"><div class="cb"></div></div><div class="c k18"></div></div>
<div style="left:462px;top:596px;width:1391px;height:3px;background:linear-gradient(#a9abb3 0,#a9abb3 1px,#a0a0a0 1px,#a0a0a0 2px,#adadb3 2px,#adadb3 3px)"></div>
<div style="left:1754px;top:596px;width:69px;height:1px;background:#f0f0f0"></div><div style="left:1754px;top:598px;width:69px;height:1px;background:#f0f0f0"></div>
<div class="r" style="top:599px"><div class="c k0 g"></div><div class="c k1 g">Diskete <i style="letter-spacing:-.85px">MAXELL</i></div><div class="c k2 ac">kom</div><div class="c k3 ar">1</div><div class="c k4 g ac">kom</div><div class="c k5">PDVOS</div><div class="c k6">PDVOS</div><div class="c k7 ar">25 %</div><div class="c k8 ar">15 %</div><div class="c k9 ar">0</div><div class="c k10"></div><div class="c k11 ar">0 %</div><div class="c k12 ar">0</div><div class="c k13 ar">10</div><div class="c k14 ar">50</div><div class="c k15 ar">30</div><div class="c k16 ar">1</div><div class="c k17 g ac"><div class="cb"></div></div><div class="c k18"></div></div>
<div style="left:462px;top:616px;width:1391px;height:3px;background:linear-gradient(#a9abb3 0,#a9abb3 1px,#a0a0a0 1px,#a0a0a0 2px,#adadb3 2px,#adadb3 3px)"></div>
<div style="left:1754px;top:616px;width:69px;height:1px;background:#f0f0f0"></div><div style="left:1754px;top:618px;width:69px;height:1px;background:#f0f0f0"></div>
<div class="r" style="top:619px"><div class="c k0 g"></div><div class="c k1 g">Drvene bojice</div><div class="c k2 ac">kom</div><div class="c k3 ar">1</div><div class="c k4 g ac">kom</div><div class="c k5">PDVOS</div><div class="c k6">PDVOS</div><div class="c k7 ar">25 %</div><div class="c k8 ar">15 %</div><div class="c k9 ar">0</div><div class="c k10"></div><div class="c k11 ar">0 %</div><div class="c k12 ar">0</div><div class="c k13 ar">10</div><div class="c k14 ar">50</div><div class="c k15 ar">30</div><div class="c k16 ar">1</div><div class="c k17 g ac"><div class="cb"></div></div><div class="c k18"></div></div>
<div style="left:462px;top:636px;width:1391px;height:3px;background:linear-gradient(#a9abb3 0,#a9abb3 1px,#a0a0a0 1px,#a0a0a0 2px,#adadb3 2px,#adadb3 3px)"></div>
<div style="left:1754px;top:636px;width:69px;height:1px;background:#f0f0f0"></div><div style="left:1754px;top:638px;width:69px;height:1px;background:#f0f0f0"></div>
<div class="r" style="top:639px"><div class="c k0 g"></div><div class="c k1 g">Fotelja klupska</div><div class="c k2 ac">kom</div><div class="c k3 ar">1</div><div class="c k4 g ac">kom</div><div class="c k5">PDVOS</div><div class="c k6">PDVOS</div><div class="c k7 ar">20 %</div><div class="c k8 ar">12 %</div><div class="c k9 ar">0</div><div class="c k10"></div><div class="c k11 ar">0 %</div><div class="c k12 ar">0</div><div class="c k13 ar">10</div><div class="c k14 ar">50</div><div class="c k15 ar">30</div><div class="c k16 ar">1</div><div class="c k17 g ac"><div class="cb"></div></div><div class="c k18"></div></div>
<div style="left:462px;top:656px;width:1391px;height:3px;background:linear-gradient(#a9abb3 0,#a9abb3 1px,#a0a0a0 1px,#a0a0a0 2px,#adadb3 2px,#adadb3 3px)"></div>
<div style="left:1754px;top:656px;width:69px;height:1px;background:#f0f0f0"></div><div style="left:1754px;top:658px;width:69px;height:1px;background:#f0f0f0"></div>
<div class="r" style="top:659px"><div class="c k0 g">101002</div><div class="c k1 g">Galax Ditaktol 0,6l</div><div class="c k2 ac">kanta</div><div class="c k3 ar">1</div><div class="c k4 g ac">kanta</div><div class="c k5">PDVOS</div><div class="c k6">PDVOS</div><div class="c k7 ar">25 %</div><div class="c k8 ar">15 %</div><div class="c k9 ar">90</div><div class="c k10"></div><div class="c k11 ar">0 %</div><div class="c k12 ar">0</div><div class="c k13 ar"></div><div class="c k14 ar"></div><div class="c k15 ar"></div><div class="c k16 ar">1</div><div class="c k17 g ac"><div class="cb"></div></div><div class="c k18"></div></div>
<div style="left:462px;top:676px;width:1391px;height:3px;background:linear-gradient(#a9abb3 0,#a9abb3 1px,#a0a0a0 1px,#a0a0a0 2px,#adadb3 2px,#adadb3 3px)"></div>
<div style="left:1754px;top:676px;width:69px;height:1px;background:#f0f0f0"></div><div style="left:1754px;top:678px;width:69px;height:1px;background:#f0f0f0"></div>
<div class="r" style="top:679px"><div class="c k0 g">101004</div><div class="c k1 g">Galax Ditaktol 4l</div><div class="c k2 ac">kanta</div><div class="c k3 ar">1</div><div class="c k4 g ac">kanta</div><div class="c k5">PDVOS</div><div class="c k6">PDVOS</div><div class="c k7 ar">25 %</div><div class="c k8 ar">15 %</div><div class="c k9 ar">90</div><div class="c k10"></div><div class="c k11 ar">0 %</div><div class="c k12 ar">0</div><div class="c k13 ar"></div><div class="c k14 ar"></div><div class="c k15 ar"></div><div class="c k16 ar">1</div><div class="c k17 g ac"><div class="cb"></div></div><div class="c k18"></div></div>
<div style="left:462px;top:696px;width:1391px;height:3px;background:linear-gradient(#a9abb3 0,#a9abb3 1px,#a0a0a0 1px,#a0a0a0 2px,#adadb3 2px,#adadb3 3px)"></div>
<div style="left:1754px;top:696px;width:69px;height:1px;background:#f0f0f0"></div><div style="left:1754px;top:698px;width:69px;height:1px;background:#f0f0f0"></div>
<div class="r" style="top:699px"><div class="c k0 g"></div><div class="c k1 g">Grašak</div><div class="c k2 ac">kg</div><div class="c k3 ar">1</div><div class="c k4 g ac">kg</div><div class="c k5">PDVOS</div><div class="c k6">PDVOS</div><div class="c k7 ar">25 %</div><div class="c k8 ar">15 %</div><div class="c k9 ar">0</div><div class="c k10"></div><div class="c k11 ar">0 %</div><div class="c k12 ar">0</div><div class="c k13 ar">10</div><div class="c k14 ar">60</div><div class="c k15 ar"></div><div class="c k16 ar">1</div><div class="c k17 g ac"><div class="cb"></div></div><div class="c k18"></div></div>
<div style="left:462px;top:716px;width:1391px;height:3px;background:linear-gradient(#a9abb3 0,#a9abb3 1px,#a0a0a0 1px,#a0a0a0 2px,#adadb3 2px,#adadb3 3px)"></div>
<div style="left:1754px;top:716px;width:69px;height:1px;background:#f0f0f0"></div><div style="left:1754px;top:718px;width:69px;height:1px;background:#f0f0f0"></div>
<div class="r" style="top:719px"><div class="c k0 g"></div><div class="c k1 g">Grožđe</div><div class="c k2 ac">kg</div><div class="c k3 ar">1</div><div class="c k4 g ac">kg</div><div class="c k5">PDVOS</div><div class="c k6">PDVOS</div><div class="c k7 ar">25 %</div><div class="c k8 ar">15 %</div><div class="c k9 ar">0</div><div class="c k10"></div><div class="c k11 ar">0 %</div><div class="c k12 ar">0</div><div class="c k13 ar">10</div><div class="c k14 ar">60</div><div class="c k15 ar"></div><div class="c k16 ar">1</div><div class="c k17 g ac"><div class="cb"></div></div><div class="c k18"></div></div>
<div style="left:462px;top:736px;width:1391px;height:3px;background:linear-gradient(#a9abb3 0,#a9abb3 1px,#a0a0a0 1px,#a0a0a0 2px,#adadb3 2px,#adadb3 3px)"></div>
<div style="left:1754px;top:736px;width:69px;height:1px;background:#f0f0f0"></div><div style="left:1754px;top:738px;width:69px;height:1px;background:#f0f0f0"></div>
<div class="r" style="top:739px"><div class="c k0 g"></div><div class="c k1 g">Haljina letnja</div><div class="c k2 ac">kom</div><div class="c k3 ar">1</div><div class="c k4 g ac">kom</div><div class="c k5">PDVOS</div><div class="c k6">PDVOS</div><div class="c k7 ar">20 %</div><div class="c k8 ar">10 %</div><div class="c k9 ar">0</div><div class="c k10"></div><div class="c k11 ar">0 %</div><div class="c k12 ar">0</div><div class="c k13 ar">10</div><div class="c k14 ar">50</div><div class="c k15 ar">30</div><div class="c k16 ar">1</div><div class="c k17 g ac"><div class="cb"></div></div><div class="c k18"></div></div>
<div style="left:462px;top:756px;width:1391px;height:3px;background:linear-gradient(#a9abb3 0,#a9abb3 1px,#a0a0a0 1px,#a0a0a0 2px,#adadb3 2px,#adadb3 3px)"></div>
<div style="left:1754px;top:756px;width:69px;height:1px;background:#f0f0f0"></div><div style="left:1754px;top:758px;width:69px;height:1px;background:#f0f0f0"></div>
<div class="r" style="top:759px"><div class="c k0 g"></div><div class="c k1 g">Hleb</div><div class="c k2 ac">kg</div><div class="c k3 ar">1</div><div class="c k4 g ac">kg</div><div class="c k5">PDVPS</div><div class="c k6">PDVPS</div><div class="c k7 ar">25 %</div><div class="c k8 ar">15 %</div><div class="c k9 ar">0</div><div class="c k10"></div><div class="c k11 ar">0 %</div><div class="c k12 ar">0</div><div class="c k13 ar">10</div><div class="c k14 ar">60</div><div class="c k15 ar"></div><div class="c k16 ar">1</div><div class="c k17 g ac"><div class="cb"></div></div><div class="c k18"></div></div>
<div style="left:462px;top:776px;width:1391px;height:3px;background:linear-gradient(#a9abb3 0,#a9abb3 1px,#a0a0a0 1px,#a0a0a0 2px,#adadb3 2px,#adadb3 3px)"></div>
<div style="left:1754px;top:776px;width:69px;height:1px;background:#f0f0f0"></div><div style="left:1754px;top:778px;width:69px;height:1px;background:#f0f0f0"></div>
<div class="r" style="top:779px"><div class="c k0 g"></div><div class="c k1 g">Jabuke</div><div class="c k2 ac">kg</div><div class="c k3 ar">1</div><div class="c k4 g ac">kg</div><div class="c k5">PDVOS</div><div class="c k6">PDVOS</div><div class="c k7 ar">25 %</div><div class="c k8 ar">15 %</div><div class="c k9 ar">0</div><div class="c k10"></div><div class="c k11 ar">0 %</div><div class="c k12 ar">0</div><div class="c k13 ar">10</div><div class="c k14 ar">60</div><div class="c k15 ar"></div><div class="c k16 ar">1</div><div class="c k17 g ac"><div class="cb"></div></div><div class="c k18"></div></div>
<div style="left:462px;top:796px;width:1391px;height:3px;background:linear-gradient(#a9abb3 0,#a9abb3 1px,#a0a0a0 1px,#a0a0a0 2px,#adadb3 2px,#adadb3 3px)"></div>
<div style="left:1754px;top:796px;width:69px;height:1px;background:#f0f0f0"></div><div style="left:1754px;top:798px;width:69px;height:1px;background:#f0f0f0"></div>
<div class="r" style="top:799px"><div class="c k0 g"></div><div class="c k1 g">Jagode</div><div class="c k2 ac">kg</div><div class="c k3 ar">1</div><div class="c k4 g ac">kg</div><div class="c k5">PDVOS</div><div class="c k6">PDVOS</div><div class="c k7 ar">25 %</div><div class="c k8 ar">15 %</div><div class="c k9 ar">0</div><div class="c k10"></div><div class="c k11 ar">0 %</div><div class="c k12 ar">0</div><div class="c k13 ar">10</div><div class="c k14 ar">60</div><div class="c k15 ar"></div><div class="c k16 ar">1</div><div class="c k17 g ac"><div class="cb"></div></div><div class="c k18"></div></div>
<div style="left:462px;top:816px;width:1391px;height:3px;background:linear-gradient(#a9abb3 0,#a9abb3 1px,#a0a0a0 1px,#a0a0a0 2px,#adadb3 2px,#adadb3 3px)"></div>
<div style="left:1754px;top:816px;width:69px;height:1px;background:#f0f0f0"></div><div style="left:1754px;top:818px;width:69px;height:1px;background:#f0f0f0"></div>
<div class="r" style="top:819px"><div class="c k0 g"></div><div class="c k1 g">Jaja</div><div class="c k2 ac">kom</div><div class="c k3 ar">1</div><div class="c k4 g ac">kom</div><div class="c k5">PDVOS</div><div class="c k6">PDVOS</div><div class="c k7 ar">25 %</div><div class="c k8 ar">15 %</div><div class="c k9 ar">0</div><div class="c k10"></div><div class="c k11 ar">0 %</div><div class="c k12 ar">0</div><div class="c k13 ar">10</div><div class="c k14 ar">60</div><div class="c k15 ar"></div><div class="c k16 ar">1</div><div class="c k17 g ac"><div class="cb"></div></div><div class="c k18"></div></div>
<div style="left:462px;top:836px;width:1391px;height:3px;background:linear-gradient(#a9abb3 0,#a9abb3 1px,#a0a0a0 1px,#a0a0a0 2px,#adadb3 2px,#adadb3 3px)"></div>
<div style="left:1754px;top:836px;width:69px;height:1px;background:#f0f0f0"></div><div style="left:1754px;top:838px;width:69px;height:1px;background:#f0f0f0"></div>
<div class="r" style="top:839px"><div class="c k0 g"></div><div class="c k1 g">Jastog</div><div class="c k2 ac">kg</div><div class="c k3 ar">1</div><div class="c k4 g ac">kg</div><div class="c k5">PDVOS</div><div class="c k6">PDVOS</div><div class="c k7 ar">25 %</div><div class="c k8 ar">15 %</div><div class="c k9 ar">0</div><div class="c k10"></div><div class="c k11 ar">0 %</div><div class="c k12 ar">0</div><div class="c k13 ar">10</div><div class="c k14 ar">60</div><div class="c k15 ar"></div><div class="c k16 ar">1</div><div class="c k17 g ac"><div class="cb"></div></div><div class="c k18"></div></div>
<div style="left:462px;top:856px;width:1391px;height:3px;background:linear-gradient(#a9abb3 0,#a9abb3 1px,#a0a0a0 1px,#a0a0a0 2px,#adadb3 2px,#adadb3 3px)"></div>
<div style="left:1754px;top:856px;width:69px;height:1px;background:#f0f0f0"></div><div style="left:1754px;top:858px;width:69px;height:1px;background:#f0f0f0"></div>
<div class="r" style="top:859px"><div class="c k0 g"></div><div class="c k1 g">Jogurt</div><div class="c k2 ac">kom</div><div class="c k3 ar">1</div><div class="c k4 g ac">kom</div><div class="c k5">PDVOS</div><div class="c k6">PDVOS</div><div class="c k7 ar">25 %</div><div class="c k8 ar">15 %</div><div class="c k9 ar">0</div><div class="c k10"></div><div class="c k11 ar">0 %</div><div class="c k12 ar">0</div><div class="c k13 ar">10</div><div class="c k14 ar">60</div><div class="c k15 ar"></div><div class="c k16 ar">1</div><div class="c k17 g ac"><div class="cb"></div></div><div class="c k18"></div></div>
<div style="left:462px;top:876px;width:1391px;height:3px;background:linear-gradient(#a9abb3 0,#a9abb3 1px,#a0a0a0 1px,#a0a0a0 2px,#adadb3 2px,#adadb3 3px)"></div>
<div style="left:1754px;top:876px;width:69px;height:1px;background:#f0f0f0"></div><div style="left:1754px;top:878px;width:69px;height:1px;background:#f0f0f0"></div>
<div class="r" style="top:879px"><div class="c k0 g"></div><div class="c k1 g">Kaput muški</div><div class="c k2 ac">kom</div><div class="c k3 ar">1</div><div class="c k4 g ac">kom</div><div class="c k5">PDVOS</div><div class="c k6">PDVOS</div><div class="c k7 ar">20 %</div><div class="c k8 ar">10 %</div><div class="c k9 ar">0</div><div class="c k10"></div><div class="c k11 ar">0 %</div><div class="c k12 ar">0</div><div class="c k13 ar">10</div><div class="c k14 ar">50</div><div class="c k15 ar">30</div><div class="c k16 ar">1</div><div class="c k17 g ac"><div class="cb"></div></div><div class="c k18"></div></div>
<div style="left:462px;top:896px;width:1391px;height:3px;background:linear-gradient(#a9abb3 0,#a9abb3 1px,#a0a0a0 1px,#a0a0a0 2px,#adadb3 2px,#adadb3 3px)"></div>
<div style="left:1754px;top:896px;width:69px;height:1px;background:#f0f0f0"></div><div style="left:1754px;top:898px;width:69px;height:1px;background:#f0f0f0"></div>
<div class="r" style="top:899px"><div class="c k0 g"></div><div class="c k1 g">Kaput ženski</div><div class="c k2 ac">kom</div><div class="c k3 ar">1</div><div class="c k4 g ac">kom</div><div class="c k5">PDVOS</div><div class="c k6">PDVOS</div><div class="c k7 ar">20 %</div><div class="c k8 ar">10 %</div><div class="c k9 ar">0</div><div class="c k10"></div><div class="c k11 ar">0 %</div><div class="c k12 ar">0</div><div class="c k13 ar">10</div><div class="c k14 ar">50</div><div class="c k15 ar">30</div><div class="c k16 ar">1</div><div class="c k17 g ac"><div class="cb"></div></div><div class="c k18"></div></div>
<div style="left:462px;top:916px;width:1391px;height:3px;background:linear-gradient(#a9abb3 0,#a9abb3 1px,#a0a0a0 1px,#a0a0a0 2px,#adadb3 2px,#adadb3 3px)"></div>
<div style="left:1754px;top:916px;width:69px;height:1px;background:#f0f0f0"></div><div style="left:1754px;top:918px;width:69px;height:1px;background:#f0f0f0"></div>
<div class="r" style="top:919px"><div class="c k0 g"></div><div class="c k1 g">Kivi</div><div class="c k2 ac">kg</div><div class="c k3 ar">1</div><div class="c k4 g ac">kg</div><div class="c k5">PDVOS</div><div class="c k6">PDVOS</div><div class="c k7 ar">25 %</div><div class="c k8 ar">15 %</div><div class="c k9 ar">0</div><div class="c k10"></div><div class="c k11 ar">0 %</div><div class="c k12 ar">0</div><div class="c k13 ar">10</div><div class="c k14 ar">60</div><div class="c k15 ar"></div><div class="c k16 ar">1</div><div class="c k17 g ac"><div class="cb"></div></div><div class="c k18"></div></div>
<div style="left:462px;top:936px;width:1391px;height:3px;background:linear-gradient(#a9abb3 0,#a9abb3 1px,#a0a0a0 1px,#a0a0a0 2px,#f0f0f0 2px,#f0f0f0 3px)"></div>
<div style="left:1754px;top:936px;width:69px;height:1px;background:#f0f0f0"></div><div style="left:1754px;top:938px;width:69px;height:1px;background:#f0f0f0"></div>
<div style="left:1754px;top:137px;width:69px;height:2px;background:#f0f0f0"></div>
<div style="left:534px;top:137px;width:2px;height:801px;background:#a0a0a4"></div>
<div style="left:755px;top:137px;width:2px;height:801px;background:#a0a0a4"></div>
<div style="left:816px;top:137px;width:2px;height:801px;background:#a0a0a4"></div>
<div style="left:871px;top:137px;width:2px;height:801px;background:#a0a0a4"></div>
<div style="left:933px;top:137px;width:2px;height:801px;background:#a0a0a4"></div>
<div style="left:998px;top:137px;width:2px;height:801px;background:#a0a0a4"></div>
<div style="left:1061px;top:137px;width:2px;height:801px;background:#a0a0a4"></div>
<div style="left:1123px;top:137px;width:2px;height:801px;background:#a0a0a4"></div>
<div style="left:1185px;top:137px;width:2px;height:801px;background:#a0a0a4"></div>
<div style="left:1236px;top:137px;width:2px;height:801px;background:#a0a0a4"></div>
<div style="left:1318px;top:137px;width:2px;height:801px;background:#a0a0a4"></div>
<div style="left:1380px;top:137px;width:2px;height:801px;background:#a0a0a4"></div>
<div style="left:1447px;top:137px;width:2px;height:801px;background:#a0a0a4"></div>
<div style="left:1518px;top:137px;width:2px;height:801px;background:#a0a0a4"></div>
<div style="left:1597px;top:137px;width:2px;height:801px;background:#a0a0a4"></div>
<div style="left:1665px;top:137px;width:2px;height:801px;background:#a0a0a4"></div>
<div style="left:1752px;top:137px;width:2px;height:801px;background:#a0a0a4"></div>
<div style="left:1823px;top:137px;width:2px;height:801px;background:#a0a0a4"></div>
<div style="left:462px;top:939px;width:1391px;height:2px;background:#f0f0f0"></div>
<div style="left:462px;top:941px;width:1391px;height:1px;background:#fff"></div>
<div style="left:462px;top:942px;width:1391px;height:19px;background:#f0f0f0"></div>
<div style="left:462px;top:941px;width:11px;height:20px;background:#696969"></div>
<div style="left:539px;top:942px;width:1216px;height:19px;background:#cdcdcd"></div>
<svg style="left:478px;top:946px" width="8" height="9" viewBox="0 0 8 9"><path d="M6.5 0.8 L2.2 4.5 L6.5 8.2" fill="none" stroke="#404040" stroke-width="2.4"/></svg>
<svg style="left:1839px;top:946px" width="8" height="9" viewBox="0 0 8 9"><path d="M1.5 0.8 L5.8 4.5 L1.5 8.2" fill="none" stroke="#404040" stroke-width="2.4"/></svg>
<div style="left:1853px;top:99px;width:1px;height:842px;background:#fff"></div><div style="left:1854px;top:99px;width:19px;height:842px;background:#f0f0f0"></div>
<div style="left:1854px;top:119px;width:18px;height:417px;background:#cdcdcd"></div>
<svg style="left:1858px;top:105px" width="9" height="8" viewBox="0 0 9 8"><path d="M1.1 6.6 L4.6 2.9 L8.1 6.6" fill="none" stroke="#505050" stroke-width="2"/></svg>
<svg style="left:1858px;top:927px" width="9" height="8" viewBox="0 0 9 8"><path d="M0.8 1.5 L4.5 5.8 L8.2 1.5" fill="none" stroke="#404040" stroke-width="2.4"/></svg>
<div style="left:1853px;top:941px;width:20px;height:20px;background:#c8c8c8"></div>
<svg style="left:1740px;top:90px" width="100" height="860" viewBox="1740 90 100 860"><rect x="1750.8" y="99.8" width="76.8" height="837.3" fill="none" stroke="#ff0000" stroke-width="4" stroke-linejoin="round"/><rect x="1751.5" y="295.8" width="77.5" height="20.6" fill="none" stroke="#ff0000" stroke-width="4.6" stroke-linejoin="round"/></svg>
<div class="t" style="left:32px;top:15px;height:18px;line-height:18px;font-size:13.8px">Artikli u magacinu</div>
<svg width="0" height="0" style="left:0;top:0"><defs>
<linearGradient id="gbl" x1="0" y1="0" x2="1" y2="1"><stop offset="0" stop-color="#f4f8ff"/><stop offset="1" stop-color="#b5cdfb"/></linearGradient>
<linearGradient id="gbr" x1="0" y1="0" x2="1" y2="0"><stop offset="0" stop-color="#a9c5fa"/><stop offset="1" stop-color="#86acf8"/></linearGradient>
<linearGradient id="grl" x1="0" y1="0" x2="1" y2="1"><stop offset="0" stop-color="#fff4f4"/><stop offset="1" stop-color="#ffb9b9"/></linearGradient>
<linearGradient id="grr" x1="0" y1="0" x2="1" y2="0"><stop offset="0" stop-color="#ffaaaa"/><stop offset="1" stop-color="#ff8282"/></linearGradient>
<g id="brickb">
<path d="M0.6 5 L0.6 10.3 L8 14.6 L8 8.6 Z" fill="url(#gbl)"/>
<path d="M8 8.6 L8 14.6 L15.5 10.3 L15.5 5 Z" fill="url(#gbr)"/>
<path d="M0.6 5 L8 1.6 L15.5 5 L8 8.8 Z" fill="#dfe9fe"/>
<path d="M0.6 4.2 L0.6 10.3 L8 14.6 L15.5 10.3 L15.5 4.2" fill="none" stroke="#4d86f7" stroke-width="1.15" stroke-linejoin="round"/>
<path d="M8 10.5 L8 14" stroke="#7aa5f9" stroke-width="0.6"/>
<path d="M0.8 4.2 Q3.4 1.3 6 4 L5.5 5.4 Q3.4 6.6 1.3 5.4 Z" fill="#fff"/>
<path d="M0.7 4.6 Q0.9 2.4 3.4 2.4 Q5.6 2.4 6 3.6" fill="none" stroke="#4d86f7" stroke-width="1"/>
<path d="M10 4 Q12.6 1.3 15.3 4.2 L14.7 5.4 Q12.6 6.6 10.5 5.4 Z" fill="#fff"/>
<path d="M10 3.6 Q10.4 2.4 12.6 2.4 Q15.1 2.4 15.4 4.6" fill="none" stroke="#4d86f7" stroke-width="1"/>
<path d="M5.2 1.9 Q8 -0.9 10.8 1.9 Q10.5 4.7 8 4.7 Q5.5 4.7 5.2 1.9 Z" fill="#fff" stroke="#4d86f7" stroke-width="1.05"/>
<path d="M5.6 5.9 Q8 4.6 10.4 5.9 L10 7.3 Q8 8.4 6 7.3 Z" fill="#fff"/>
<path d="M5.4 7.8 L5.4 5.2 M10.6 7.8 L10.6 5.2" fill="none" stroke="#4d86f7" stroke-width="1.1"/>
<path d="M5.2 2.4 Q5.6 5 8 5 Q10.4 5 10.8 2.4" fill="none" stroke="#4d86f7" stroke-width="1.3"/>
</g>
<g id="brickr">
<path d="M0.6 5 L0.6 10.3 L8 14.6 L8 8.6 Z" fill="url(#grl)"/>
<path d="M8 8.6 L8 14.6 L15.5 10.3 L15.5 5 Z" fill="url(#grr)"/>
<path d="M0.6 5 L8 1.6 L15.5 5 L8 8.8 Z" fill="#ffe3e3"/>
<path d="M0.6 4.2 L0.6 10.3 L8 14.6 L15.5 10.3 L15.5 4.2" fill="none" stroke="#ff4a4a" stroke-width="1.15" stroke-linejoin="round"/>
<path d="M8 10.5 L8 14" stroke="#ff8a8a" stroke-width="0.6"/>
<path d="M0.8 4.2 Q3.4 1.3 6 4 L5.5 5.4 Q3.4 6.6 1.3 5.4 Z" fill="#fff"/>
<path d="M0.7 4.6 Q0.9 2.4 3.4 2.4 Q5.6 2.4 6 3.6" fill="none" stroke="#ff4a4a" stroke-width="1"/>
<path d="M10 4 Q12.6 1.3 15.3 4.2 L14.7 5.4 Q12.6 6.6 10.5 5.4 Z" fill="#fff"/>
<path d="M10 3.6 Q10.4 2.4 12.6 2.4 Q15.1 2.4 15.4 4.6" fill="none" stroke="#ff4a4a" stroke-width="1"/>
<path d="M5.2 1.9 Q8 -0.9 10.8 1.9 Q10.5 4.7 8 4.7 Q5.5 4.7 5.2 1.9 Z" fill="#fff" stroke="#ff4a4a" stroke-width="1.05"/>
<path d="M5.6 5.9 Q8 4.6 10.4 5.9 L10 7.3 Q8 8.4 6 7.3 Z" fill="#fff"/>
<path d="M5.4 7.8 L5.4 5.2 M10.6 7.8 L10.6 5.2" fill="none" stroke="#ff4a4a" stroke-width="1.1"/>
<path d="M5.2 2.4 Q5.6 5 8 5 Q10.4 5 10.8 2.4" fill="none" stroke="#ff4a4a" stroke-width="1.3"/>
</g>
</defs></svg>
<div style="left:1px;top:36px;width:7px;height:90px;background:linear-gradient(rgba(255,255,255,.05),rgba(255,255,255,.4))"></div>
<div style="left:1879px;top:36px;width:7px;height:90px;background:linear-gradient(rgba(255,255,255,.05),rgba(255,255,255,.4))"></div>
<div style="left:0;top:0;width:1889px;height:1px;background:#000"></div>
<div style="left:1px;top:1px;width:1885px;height:1px;background:#f4f8fc"></div>
<div style="left:0;top:2px;width:1px;height:975px;background:#fdfeff"></div>
<div style="left:1886px;top:2px;width:1px;height:975px;background:#3fd3f3"></div>
<div style="left:1887px;top:2px;width:1px;height:975px;background:#000"></div>
<div style="left:1888px;top:0;width:1px;height:977px;background:#fff"></div>
<div style="left:1px;top:976px;width:1886px;height:1px;background:#22cbe3"></div>
<svg style="left:0;top:0" width="6" height="6" viewBox="0 0 6 6"><path d="M0 0 H6 V1 H3.5 Q1 1 1 3.5 V6 H0 Z" fill="#fff"/><path d="M0.5 6 V3.5 Q0.5 0.5 3.5 0.5 H6" fill="none" stroke="#333" stroke-width="1"/></svg>
<svg style="left:1882px;top:0" width="7" height="7" viewBox="0 0 7 7"><path d="M0 0 H7 V7 H6 V3.5 Q6 1 3 1 H0 Z" fill="#fff"/><path d="M0 0.5 H3 Q5.5 0.5 5.5 3.5 V7" fill="none" stroke="#111" stroke-width="1"/></svg>
<svg style="left:9px;top:14px" width="20" height="16" viewBox="9 14 20 16">
<path d="M13.2 16.4 L10.4 23.4 H16.6 Z M24.8 16.4 L21.4 23.4 H27.6 Z" fill="#2e8468" stroke="#2e8468" stroke-width="1.5" stroke-linejoin="round"/>
<rect x="12.2" y="15.1" width="13.6" height="2.2" rx="0.7" fill="#2e8668"/>
<rect x="18.3" y="15.3" width="1.6" height="11.2" fill="#35996f"/>
<path d="M9.9 22.6 H16.7 A3.4 4.2 0 0 1 9.9 22.6 Z" fill="#229a5e"/>
<path d="M21.3 22.6 H28.1 A3.4 4.2 0 0 1 21.3 22.6 Z" fill="#229a5e"/>
<path d="M10 22.4 H16.6 M21.4 22.4 H28" stroke="#2c8166" stroke-width="1.6"/>
<path d="M15 28.9 Q15 25.4 19.1 25.4 Q23.2 25.4 23.2 28.9 Z" fill="#2a9563"/>
<rect x="16.5" y="26.2" width="5.2" height="2.1" rx="0.5" fill="#1fdc60"/>
<circle cx="12.9" cy="21.4" r="0.7" fill="#8fa3b5"/><circle cx="25.1" cy="21.4" r="0.7" fill="#8fa3b5"/>
</svg><div style="left:1756px;top:11px;width:39px;height:22px;border:1px solid #54658a;border-radius:3px;background:linear-gradient(#c6d8ec 0,#bfd3ea 42%,#9ab3d2 46%,#a2bbd9 75%,#b3cbe6 100%);box-shadow:inset 0 0 0 1px rgba(255,255,255,.55)"></div><div style="left:1797px;top:11px;width:39px;height:22px;border:1px solid #54658a;border-radius:3px;background:linear-gradient(#c6d8ec 0,#bfd3ea 42%,#9ab3d2 46%,#a2bbd9 75%,#b3cbe6 100%);box-shadow:inset 0 0 0 1px rgba(255,255,255,.55)"></div><div style="left:1838px;top:11px;width:39px;height:22px;border:1px solid #5b1822;border-radius:3px;background:linear-gradient(#eaaea2 0,#df8a7a 42%,#bb3c22 46%,#c6502f 75%,#d7755c 100%);box-shadow:inset 0 0 0 1px rgba(255,255,255,.55)"></div>
<div style="left:1769px;top:22px;width:13px;height:6px;border:1px solid #4a556e;border-radius:1.5px;background:linear-gradient(#fff,#e4e4e4)"></div>
<div style="left:1810px;top:16px;width:13px;height:12px;border:1px solid #4a556e;border-radius:1.5px;background:linear-gradient(#fff,#e4e4e4)"></div>
<div style="left:1814px;top:20px;width:5px;height:4px;border:1px solid #4a556e;background:#a9c0dd"></div>
<svg style="left:1849px;top:14px" width="17" height="16" viewBox="1849 14 17 16"><path d="M1851.45 16.40 L1855.85 16.40 L1857.65 18.83 L1859.45 16.40 L1863.85 16.40 L1859.85 21.80 L1863.85 27.20 L1859.45 27.20 L1857.65 24.77 L1855.85 27.20 L1851.45 27.20 L1855.45 21.80 Z" fill="#f6f6f6" stroke="#4a3f52" stroke-width="1.2" stroke-linejoin="round"/></svg>

</body></html>
